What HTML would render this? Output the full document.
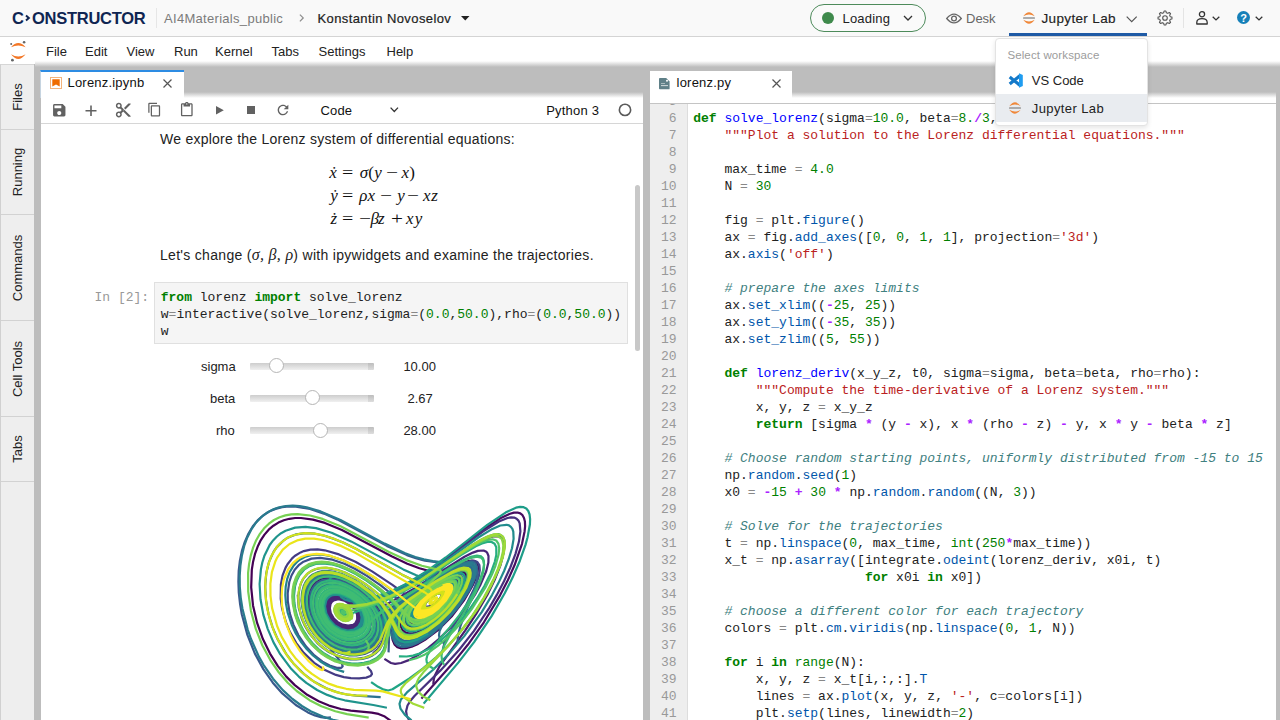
<!DOCTYPE html>
<html><head><meta charset="utf-8">
<style>
*{box-sizing:border-box}
html,body{margin:0;padding:0;width:1280px;height:720px;overflow:hidden;background:#bdbdbd;font-family:"Liberation Sans",sans-serif;color:#222}
.a{position:absolute}
svg{display:block;position:absolute;overflow:visible}
/* header */
#hdr{left:0;top:0;width:1280px;height:37px;background:#f9f9f9;border-bottom:1px solid #d4d4d4}
#logo{left:12px;top:8.5px;font-weight:bold;font-size:16.5px;color:#0f2552;letter-spacing:0px;white-space:nowrap;line-height:19px}
.ht{font-size:13px;white-space:nowrap;top:10.8px;line-height:16px}
.semi{-webkit-text-stroke:0.2px currentColor}
/* menu */
#menu{left:0;top:37px;width:1280px;height:27px;background:#fff}
#menushadow{left:35px;top:61px;width:1245px;height:5.5px;background:linear-gradient(#fff,#bdbdbd)}
.mi{font-size:13px;top:43.5px;color:#222;white-space:nowrap;line-height:16px}
/* sidebar */
#side{left:0;top:64px;width:34px;height:656px;background:#eeeeee;border-left:1px solid #d0d0d0;border-top:1px solid #d6d6d6}
.st{left:1px;width:33px;border-bottom:1px solid #d2d2d2}
.stx{position:absolute;left:50%;top:50%;transform:translate(-50%,-50%) rotate(-90deg);font-size:13px;color:#222;white-space:nowrap;line-height:16px}
/* panels */
.panel{background:#fff}
.toolshadow{background:linear-gradient(rgba(189,189,189,1),rgba(255,255,255,1))}
.tab{background:#fff}
.tt{font-size:13px;white-space:nowrap;letter-spacing:0.2px;line-height:16px;color:#111}
.mono{font-family:"Liberation Mono",monospace;font-size:13px}
.ln{height:17px;line-height:17px;white-space:pre}
b{font-weight:normal}
.k{color:#008000;font-weight:bold}
.d{color:#0000ff}
.s{color:#ba2121}
.n{color:#008000}
.c{color:#408080;font-style:italic}
.o{color:#aa22ff;font-weight:bold}
.e{color:#888}
.p{color:#0055aa}
.bi{color:#008000}
.gut{color:#999;text-align:right}
.md{font-size:14px;color:#222;white-space:nowrap;letter-spacing:0.25px;line-height:17px}
.eq{font-family:"Liberation Serif",serif;font-size:17.5px;white-space:nowrap;color:#111;line-height:20px}
.eqg{font-family:"Liberation Serif",serif;font-size:17px;line-height:30px;color:#111;white-space:nowrap}
.wl{font-size:13px;white-space:nowrap;color:#222;line-height:16px}
.track{height:7px;background:linear-gradient(90deg,rgba(0,0,0,0) 95%,rgba(0,0,0,.08) 95%),linear-gradient(#cdcdcd,#e2e2e2 60%,#f0f0f0);border-radius:1px}
.thumb{width:15px;height:15px;border-radius:50%;background:#fff;border:1px solid #b5b5b5}
/* dropdown */
#dd{left:995px;top:37.7px;width:152.5px;height:88.6px;background:#fff;border:1px solid #e3e3e3;border-radius:4px;box-shadow:0 2px 5px rgba(0,0,0,.10)}
</style></head>
<body>
<!-- ============ HEADER ============ -->
<div id="hdr" class="a"></div>
<div id="logo" class="a">C<span style="display:inline-block;width:8px"></span><span style="letter-spacing:-0.25px">ONSTRUCTOR</span></div>
<svg style="left:25px;top:15px" width="5" height="6"><path d="M1 0.6 L3.8 3 L1 5.4" fill="none" stroke="#0f2552" stroke-width="2"/></svg>
<div class="a" style="left:156px;top:8px;width:1px;height:20px;background:#e6e6e6"></div>
<div class="a ht" style="left:164px;color:#7b7b7b;letter-spacing:0.3px">AI4Materials_public</div>
<svg style="left:298.5px;top:14px" width="6" height="9"><path d="M0.9 0.6 L4.2 3.9 L0.9 7.4" fill="none" stroke="#8f8f8f" stroke-width="1.3"/></svg>
<div class="a ht semi" style="left:317.5px;color:#222;letter-spacing:0.4px">Konstantin Novoselov</div>
<svg style="left:461px;top:16px" width="9" height="5"><path d="M0 0 L8.5 0 L4.25 4.5Z" fill="#222"/></svg>

<!-- Loading pill -->
<div class="a" style="left:810px;top:4px;width:116px;height:28px;border:1px solid #4d8b5b;border-radius:14px;background:#fafafa"></div>
<div class="a" style="left:822px;top:12px;width:12px;height:12px;border-radius:50%;background:#3f8a4c"></div>
<div class="a ht" style="left:842.5px;color:#222;letter-spacing:0.2px">Loading</div>
<svg style="left:903px;top:15px" width="10" height="6"><path d="M1 1 L5 5 L9 1" fill="none" stroke="#333" stroke-width="1.3"/></svg>

<!-- Desk -->
<svg style="left:946px;top:12.5px" width="16" height="11"><path d="M0.7 5.5 Q8 -3.3 15.3 5.5 Q8 14.3 0.7 5.5Z" fill="none" stroke="#666" stroke-width="1.3"/><circle cx="8" cy="5.5" r="2.4" fill="none" stroke="#666" stroke-width="1.3"/></svg>
<div class="a ht" style="left:966px;color:#666">Desk</div>

<!-- Jupyter Lab -->
<svg style="left:1022px;top:11px" width="14" height="14"><path d="M1.3 5.2 Q7 -2.6 12.7 5.2 Q7 1.6 1.3 5.2Z" fill="#f0883a"/><path d="M1.3 8.8 Q7 16.6 12.7 8.8 Q7 12.4 1.3 8.8Z" fill="#f0883a"/><rect x="1" y="6.1" width="12" height="1.8" rx="0.4" fill="#9a9a9a" opacity="0.8"/></svg>
<div class="a ht semi" style="left:1041.5px;color:#222;letter-spacing:0.35px;font-size:13.5px;top:10.8px;-webkit-text-stroke:0.15px #222">Jupyter Lab</div>
<svg style="left:1125.5px;top:15.5px" width="12" height="7"><path d="M0.7 0.7 L5.7 5.7 L10.7 0.7" fill="none" stroke="#555" stroke-width="1.2"/></svg>
<div class="a" style="left:1009px;top:33px;width:138px;height:3px;background:#1f5ba6"></div>

<!-- gear / user / help -->
<svg style="left:1157px;top:10px" width="16" height="16"><path d="M13.23 6.66 L14.94 7.07 L14.94 8.93 L13.23 9.34 L12.65 10.75 L13.56 12.25 L12.25 13.56 L10.75 12.65 L9.34 13.23 L8.93 14.94 L7.07 14.94 L6.66 13.23 L5.25 12.65 L3.75 13.56 L2.44 12.25 L3.35 10.75 L2.77 9.34 L1.06 8.93 L1.06 7.07 L2.77 6.66 L3.35 5.25 L2.44 3.75 L3.75 2.44 L5.25 3.35 L6.66 2.77 L7.07 1.06 L8.93 1.06 L9.34 2.77 L10.75 3.35 L12.25 2.44 L13.56 3.75 L12.65 5.25Z" fill="none" stroke="#555" stroke-width="1.1" stroke-linejoin="round"/><circle cx="8" cy="8" r="2.3" fill="none" stroke="#555" stroke-width="1.1"/></svg>
<div class="a" style="left:1183px;top:8px;width:1px;height:20px;background:#e4e4e4"></div>
<svg style="left:1196px;top:10.5px" width="13" height="14"><circle cx="6" cy="3.3" r="2.6" fill="none" stroke="#333" stroke-width="1.3"/><path d="M0.8 13 L0.8 11.5 Q0.8 7.6 6 7.6 Q11.2 7.6 11.2 11.5 L11.2 13Z" fill="none" stroke="#333" stroke-width="1.3" stroke-linejoin="round"/></svg>
<svg style="left:1212px;top:15.5px" width="9" height="5"><path d="M0.7 0.7 L4 3.9 L7.3 0.7" fill="none" stroke="#333" stroke-width="1.3"/></svg>
<div class="a" style="left:1237px;top:11px;width:13.2px;height:13.2px;border-radius:50%;background:#1680b9"></div>
<div class="a" style="left:1237px;top:11.5px;width:13.2px;text-align:center;font-size:11px;font-weight:bold;color:#fff;line-height:13px">?</div>
<svg style="left:1254.5px;top:15.5px" width="9" height="5"><path d="M0.7 0.7 L4 3.9 L7.3 0.7" fill="none" stroke="#333" stroke-width="1.3"/></svg>

<!-- ============ MENU ============ -->
<div id="menu" class="a"></div>
<div id="menushadow" class="a"></div>
<svg style="left:10px;top:41px" width="17" height="21"><path d="M1 6.2 Q8.3 -2.2 15.6 6.2 Q8.3 3 1 6.2Z" fill="#f37726"/><path d="M1 13.3 Q8.3 22.7 15.6 13.3 Q8.3 17.9 1 13.3Z" fill="#f37726"/><circle cx="1.2" cy="2.9" r="1" fill="#666"/><circle cx="14.1" cy="1.3" r="1.3" fill="#666"/><circle cx="2.4" cy="19.2" r="1.4" fill="#666"/></svg>
<div class="a mi" style="left:46px">File</div>
<div class="a mi" style="left:85px">Edit</div>
<div class="a mi" style="left:126.5px">View</div>
<div class="a mi" style="left:174px">Run</div>
<div class="a mi" style="left:215px">Kernel</div>
<div class="a mi" style="left:271.5px">Tabs</div>
<div class="a mi" style="left:318.5px">Settings</div>
<div class="a mi" style="left:386.5px">Help</div>

<!-- ============ SIDEBAR ============ -->
<div id="side" class="a"></div>
<div class="a st" style="top:64px;height:66px"><span class="stx">Files</span></div>
<div class="a st" style="top:130px;height:85px"><span class="stx">Running</span></div>
<div class="a st" style="top:215px;height:106px"><span class="stx">Commands</span></div>
<div class="a st" style="top:321px;height:96px"><span class="stx">Cell Tools</span></div>
<div class="a st" style="top:417px;height:65px"><span class="stx">Tabs</span></div>

<!-- ============ NOTEBOOK PANEL ============ -->
<div class="a panel" style="left:41px;top:97px;width:602px;height:623px"></div>
<div class="a toolshadow" style="left:41px;top:92px;width:602px;height:6px"></div>
<div class="a tab" style="left:40px;top:70px;width:143.5px;height:28px;border-top:2px solid #2d8ce3;border-left:1px solid #c6d4e0"></div>
<svg style="left:50px;top:77px" width="12" height="12"><rect x="0.5" y="0.5" width="11" height="11" fill="#fff" stroke="#f3b47c" stroke-width="1"/><path d="M2.3 2.3 H9.7 V9.6 L6 7.6 L2.3 9.6Z" fill="#ef6c00"/></svg>
<div class="a tt" style="left:67.5px;top:75px">Lorenz.ipynb</div>
<svg style="left:162.5px;top:78.5px" width="9" height="9"><path d="M0.5 0.5 L8.5 8.5 M8.5 0.5 L0.5 8.5" stroke="#555" stroke-width="1.2"/></svg>

<!-- toolbar icons -->
<svg style="left:50.7px;top:101.8px" width="16.5" height="16.5" viewBox="0 0 24 24"><path fill="#616161" d="M17 3H5c-1.11 0-2 .9-2 2v14c0 1.1.89 2 2 2h14c1.1 0 2-.9 2-2V7l-4-4zm-5 16c-1.66 0-3-1.34-3-3s1.34-3 3-3 3 1.34 3 3-1.34 3-3 3zm3-10H5V5h10v4z"/></svg>
<svg style="left:85px;top:104.5px" width="12" height="12"><path d="M6 0.5 V11 M0.5 5.8 H11.5" stroke="#616161" stroke-width="1.6"/></svg>
<svg style="left:114.8px;top:102.3px" width="16.5" height="15.5" viewBox="1 1 22 21"><path fill="#616161" d="M9.64 7.64c.23-.5.36-1.050.36-1.64 0-2.21-1.79-4-4-4S2 3.79 2 6s1.79 4 4 4c.59 0 1.14-.13 1.64-.36L10 12l-2.36 2.360C7.14 14.13 6.59 14 6 14c-2.21 0-4 1.79-4 4s1.79 4 4 4 4-1.79 4-4c0-.59-.13-1.14-.36-1.64L12 14l7 7h3v-1L9.64 7.64zM6 8c-1.1 0-2-.89-2-2s.9-2 2-2 2 .89 2 2-.9 2-2 2zm0 12c-1.1 0-2-.89-2-2s.9-2 2-2 2 .89 2 2-.9 2-2 2zm6-7.5c-.28 0-.5-.22-.5-.5s.22-.5.5-.5.5.22.5.5-.22.5-.5.5zM19 3l-6 6 2 2 7-7V3z"/></svg>
<svg style="left:147.1px;top:102.4px" width="15" height="15" viewBox="0 0 24 24"><path fill="#616161" d="M16 1H4c-1.1 0-2 .9-2 2v14h2V3h12V1zm3 4H8c-1.1 0-2 .9-2 2v14c0 1.1.9 2 2 2h11c1.1 0 2-.9 2-2V7c0-1.1-.9-2-2-2zm0 16H8V7h11v14z"/></svg>
<svg style="left:178.9px;top:102.4px" width="15.6" height="15.6" viewBox="0 0 24 24"><path fill="#616161" d="M19 2h-4.18C14.4.84 13.3 0 12 0c-1.3 0-2.4.84-2.82 2H5c-1.1 0-2 .9-2 2v16c0 1.1.9 2 2 2h14c1.1 0 2-.9 2-2V4c0-1.1-.9-2-2-2zm-7 0c.55 0 1 .45 1 1s-.45 1-1 1-1-.45-1-1 .45-1 1-1zm7 18H5V4h2v3h10V4h2v16z"/></svg>
<svg style="left:215.7px;top:105.8px" width="8" height="9"><path d="M0 0 V8.6 L7.8 4.3Z" fill="#616161"/></svg>
<div class="a" style="left:247px;top:106px;width:8px;height:8px;background:#616161"></div>
<svg style="left:274.8px;top:101.8px" width="16" height="16" viewBox="0 0 24 24"><path fill="#616161" d="M17.65 6.35C16.2 4.9 14.21 4 12 4c-4.42 0-7.99 3.58-7.990 8s3.570 8 7.990 8c3.73 0 6.84-2.55 7.73-6h-2.08c-.82 2.33-3.04 4-5.650 4-3.31 0-6-2.69-6-6s2.69-6 6-6c1.66 0 3.14.69 4.22 1.78L13 11h7V4l-2.35 2.35z"/></svg>
<div class="a tt" style="left:320.4px;top:102.5px">Code</div>
<svg style="left:389.5px;top:107.2px" width="9" height="6"><path d="M0.6 0.6 L4.3 4.5 L8 0.6" fill="none" stroke="#333" stroke-width="1.3"/></svg>
<div class="a tt" style="left:546.2px;top:103px">Python 3</div>
<svg style="left:617px;top:102px" width="16" height="16"><circle cx="8" cy="7.9" r="5.65" fill="none" stroke="#5a5a5a" stroke-width="1.6"/></svg>
<div class="a" style="left:41px;top:123px;width:602px;height:1px;background:#d6d6d6"></div>

<!-- notebook content -->
<div class="a md" style="left:160px;top:131px">We explore the Lorenz system of differential equations:</div>
<span class="a eqg" style="left:329.30px;top:158.06px;font-style:italic">ẋ</span>
<span class="a eqg" style="left:342.22px;top:158.06px;transform:scaleX(1.175);transform-origin:0 0">=</span>
<span class="a eqg" style="left:359.80px;top:158.06px;font-style:italic">σ</span>
<span class="a eqg" style="left:368.20px;top:158.06px">(</span>
<span class="a eqg" style="left:374.30px;top:158.06px;font-style:italic">y</span>
<span class="a eqg" style="left:385.55px;top:158.06px;transform:scaleX(1.250);transform-origin:0 0">−</span>
<span class="a eqg" style="left:401.40px;top:158.06px;font-style:italic">x</span>
<span class="a eqg" style="left:409.20px;top:158.06px">)</span>
<span class="a eqg" style="left:330.30px;top:181.36px;font-style:italic">ẏ</span>
<span class="a eqg" style="left:342.22px;top:181.36px;transform:scaleX(1.175);transform-origin:0 0">=</span>
<span class="a eqg" style="left:359.20px;top:181.36px;font-style:italic">ρ</span>
<span class="a eqg" style="left:367.40px;top:181.36px;font-style:italic">x</span>
<span class="a eqg" style="left:379.65px;top:181.36px;transform:scaleX(1.250);transform-origin:0 0">−</span>
<span class="a eqg" style="left:397.20px;top:181.36px;font-style:italic">y</span>
<span class="a eqg" style="left:407.26px;top:181.36px;transform:scaleX(1.237);transform-origin:0 0">−</span>
<span class="a eqg" style="left:423.10px;top:181.36px;font-style:italic">x</span>
<span class="a eqg" style="left:431.30px;top:181.36px;font-style:italic">z</span>
<span class="a eqg" style="left:330.50px;top:204.26px;font-style:italic">ż</span>
<span class="a eqg" style="left:342.22px;top:204.26px;transform:scaleX(1.175);transform-origin:0 0">=</span>
<span class="a eqg" style="left:358.55px;top:204.26px;transform:scaleX(1.250);transform-origin:0 0">−</span>
<span class="a eqg" style="left:370.40px;top:204.26px;font-style:italic">β</span>
<span class="a eqg" style="left:378.00px;top:204.26px;font-style:italic">z</span>
<span class="a eqg" style="left:390.75px;top:204.26px;transform:scaleX(1.250);transform-origin:0 0">+</span>
<span class="a eqg" style="left:406.10px;top:204.26px;font-style:italic">x</span>
<span class="a eqg" style="left:414.75px;top:204.26px;font-style:italic">y</span>
<div class="a md" style="left:160px;top:246px;letter-spacing:0.3px">Let's change (<span style="font-family:'Liberation Serif',serif;font-style:italic;font-size:16px">σ, β, ρ</span>) with ipywidgets and examine the trajectories.</div>
<div class="a mono" style="left:94.5px;top:288.5px;color:#999"><div class="ln">In [2]:</div></div>
<div class="a" style="left:154px;top:282px;width:474px;height:62px;background:#f5f5f5;border:1px solid #e0e0e0"></div>
<div class="a mono" style="left:160.75px;top:288.5px">
<div class="ln"><b class="k">from</b> lorenz <b class="k">import</b> solve_lorenz</div>
<div class="ln">w<b class="e">=</b>interactive(solve_lorenz,sigma<b class="e">=</b>(<b class="n">0.0</b>,<b class="n">50.0</b>),rho<b class="e">=</b>(<b class="n">0.0</b>,<b class="n">50.0</b>))</div>
<div class="ln">w</div>
</div>
<div class="a" style="left:635px;top:185px;width:5.4px;height:166px;background:#c8c8c8;border-radius:3px"></div>

<!-- widgets -->
<div class="a wl" style="left:201px;top:359px">sigma</div>
<div class="a wl" style="left:210px;top:391px">beta</div>
<div class="a wl" style="left:216px;top:423px">rho</div>
<div class="a track" style="left:250px;top:362.5px;width:124px"></div>
<div class="a track" style="left:250px;top:394.5px;width:124px"></div>
<div class="a track" style="left:250px;top:426.5px;width:124px"></div>
<div class="a thumb" style="left:268.75px;top:358.4px"></div>
<div class="a thumb" style="left:305.25px;top:390.25px"></div>
<div class="a thumb" style="left:312.5px;top:422.5px"></div>
<div class="a wl" style="left:403.4px;top:359px">10.00</div>
<div class="a wl" style="left:407.5px;top:391px">2.67</div>
<div class="a wl" style="left:403.4px;top:423px">28.00</div>

<svg id="plot" width="1280" height="720" viewBox="0 0 1280 720" style="position:absolute;left:0;top:0" fill="none" stroke-width="2.2" stroke-linejoin="round" stroke-linecap="square"><path stroke="#440154" d="M394.3 723.3 384.8 716.6 378.5 713.9 371.7 712.7 350.7 710.7 340.9 709.0 329.0 705.6 318.7 701.3 307.2 694.8 294.8 685.1 286.3 676.6 277.9 666.1 270.0 653.6 262.9 639.1 257.1 622.9 253.0 605.4 251.2 587.4 251.8 569.9 253.1 561.7 255.0 553.9 257.6 546.8 260.7 540.3 264.5 534.6 268.7 529.7 273.4 525.7 278.4 522.6 283.8 520.3 289.4 518.8 295.1 518.0 301.0 518.0 313.0 519.6 324.9 522.9 341.9 530.0 391.6 556.3 407.3 563.7 419.4 568.3 437.6 573.4 438.9 575.1 437.7 577.5 417.7 597.8 413.0 603.7 409.9 609.0 408.3 614.0 408.4 618.6 410.5 621.8 413.9 623.5 420.2 623.2 427.3 620.3 435.1 615.3 443.5 607.7 450.6 599.2 455.8 590.4 457.3 586.4 457.7 583.1 457.1 580.8 455.9 579.7 453.5 579.2 449.2 580.0 438.1 585.3 423.6 595.0 412.4 604.9 407.2 612.1 405.7 615.7 405.1 618.9 405.4 621.7 406.7 624.4 408.9 626.3 411.7 627.3 414.7 627.4 418.4 626.9 427.0 623.4 435.7 617.5 444.2 609.7 452.4 599.9 458.7 589.4 461.1 581.6 460.8 578.5 459.6 577.0 457.0 576.2 452.2 576.9 446.1 579.4 439.4 583.0 421.4 595.0 414.3 600.7 408.3 606.5 404.6 611.1 402.2 615.2 400.7 619.5 400.3 623.3 400.9 627.0 402.6 630.0 405.2 632.2 408.6 633.3 412.5 633.3 416.6 632.5 426.2 628.2 437.5 620.2 447.6 610.3 457.3 597.9 463.7 586.5 465.7 580.7 466.3 577.1 465.8 574.3 464.4 572.4 461.1 571.5 456.4 572.4 449.0 575.4 440.8 579.9 427.7 588.3 415.1 597.2 406.7 604.1 400.1 610.7 396.3 615.9 393.6 621.8 392.1 627.6 391.8 634.0 392.6 639.9 394.5 644.4 397.4 647.2 401.3 648.4 406.0 648.2 411.6 646.7 418.1 643.9 425.0 639.9 437.9 630.1 451.6 616.5 463.8 600.7 472.5 585.7 475.7 578.5 477.6 572.0 478.1 566.7 477.0 562.9 474.4 560.9 471.7 560.6 468.5 561.0 460.6 563.9 448.9 570.2 410.9 594.6 391.6 608.0 382.4 616.3 370.8 630.8 365.0 636.1 361.0 638.2 356.2 639.7 351.4 640.2 346.9 639.9"/><path stroke="#470d60" d="M422.2 697.8 453.4 662.6 467.8 644.8 483.9 622.3 500.2 595.1 507.8 580.3 514.5 565.3 522.0 543.8 524.6 531.4 525.1 526.2 524.9 521.6 524.0 518.0 522.5 515.2 520.3 513.4 517.5 512.5 514.0 512.6 510.0 513.7 500.3 518.3 482.9 530.0 444.2 559.5 425.9 572.5 403.9 585.6 385.4 593.9 377.4 596.4 366.8 598.6 357.9 599.1 348.4 598.0 341.3 595.6 335.7 591.5 333.8 588.9 333.0 586.5 333.2 584.5 334.2 582.9 337.4 581.5 342.8 581.9 349.0 584.3 355.3 588.0 361.0 592.5 366.6 598.2 371.4 604.7 374.7 610.9 376.7 616.7 377.6 622.6 377.5 628.0 376.3 633.4 374.1 637.8 371.0 641.6 367.1 644.6 362.0 646.9 356.3 648.1 350.4 648.3 344.7 647.4 338.5 645.5 333.1 642.9 327.7 639.2 322.3 634.4 318.4 629.9 314.0 622.9 311.3 617.0 309.3 610.8 308.3 604.5 308.2 598.3 309.2 592.6 311.3 587.6 314.3 583.5 319.5 579.7 325.8 577.9 334.4 578.2 343.1 580.5 352.8 585.1 362.5 591.6 371.0 599.1 378.2 608.0 382.8 616.4 385.5 625.0 386.6 635.1 385.9 644.8 384.0 651.4 380.7 656.3 375.5 660.3 368.8 663.1 361.9 664.6 355.1 664.9 348.2 664.3 340.2 662.5 333.0 659.8 325.2 655.5 319.2 651.1 313.1 645.4 307.3 638.4 302.0 630.1 297.6 620.6 295.4 613.9 293.3 603.3 292.9 596.4 293.3 589.6 294.5 583.3 296.6 577.7 299.5 572.8 303.1 568.8 309.6 564.6 314.4 563.0 322.3 562.2 327.7 562.6 335.8 564.4 343.8 567.2 351.3 570.6 360.5 575.7 370.4 582.1 380.1 589.3 388.6 596.7 408.3 617.6 412.7 620.2 417.3 621.0 423.6 619.9 430.4 616.7 437.1 611.9 444.1 605.3 450.3 597.5 454.5 589.7 455.5 586.4 455.6 583.8 454.7 581.9 453.4 581.2 450.9 581.0 446.8 582.0 435.6 587.7 422.8 596.7 413.7 605.2 409.0 612.3 408.0 615.6 407.9 618.5 408.8 621.2 410.4 623.0 412.8 624.1 416.0 624.5 422.8 623.0 430.0 619.4 438.3 613.2 446.0 605.6 452.9 596.5 457.1 588.6 458.4 582.3 457.7 580.0 456.4 579.0 453.7 578.6 449.1 579.6 437.6 585.3 421.7 596.1 410.9 606.0 405.7 613.7 404.5 617.2 404.2 620.4 404.8 623.5 406.3 626.0 408.8 627.7 411.9 628.5 415.7 628.4 420.6 627.2 425.5 625.0 431.2 621.6 437.4 616.8 443.0 611.8 452.7 600.5"/><path stroke="#481a6c" d="M433.4 683.2 433.8 679.3 435.0 675.3 439.4 666.6 465.1 630.6 476.2 613.9 487.3 594.9 494.6 580.0 500.4 565.4 503.6 552.6 504.1 545.7 503.8 542.9 502.0 538.6 500.5 537.3 498.6 536.4 493.7 536.3 487.5 538.2 480.3 541.7 467.9 549.2 420.5 580.9 406.0 589.4 393.5 595.7 380.8 600.9 367.6 605.0 356.6 607.0 345.7 607.5 348.0 613.2 347.6 615.4 346.2 616.7 342.7 616.6 339.5 614.1 338.4 610.6 338.9 609.2 339.9 608.2 341.5 607.8 343.5 608.2 346.8 610.9 347.9 614.4 347.4 616.0 346.2 617.0 344.5 617.3 342.6 616.8 339.4 614.3 338.1 610.6 338.6 609.0 339.7 607.9 341.3 607.6 343.4 608.0 347.0 610.8 348.0 612.7 348.2 614.7 347.6 616.3 346.3 617.3 344.5 617.6 342.4 617.1 339.1 614.3 338.1 612.4 337.8 610.4 338.3 608.7 339.4 607.7 341.1 607.3 343.4 607.7 347.2 610.6 348.3 612.6 348.6 614.7 347.9 616.5 346.6 617.5 344.7 617.9 342.5 617.4 338.9 614.6 337.8 612.5 337.5 610.4 338.0 608.6 339.3 607.4 341.2 606.9 343.5 607.4 345.8 608.7 347.5 610.6 348.6 612.7 348.9 615.0 348.2 616.8 346.7 617.9 344.7 618.2 342.4 617.7 338.6 614.6 337.5 612.4 337.1 610.2 337.7 608.2 339.1 607.0 342.1 606.7 345.6 608.3 348.3 611.3 349.3 614.6 348.3 617.3 345.7 618.6 342.3 618.0 339.2 615.9"/><path stroke="#482576" d="M385.3 659.5 391.0 663.0 395.1 663.9 401.1 663.0 408.8 660.1 418.1 655.0 428.0 648.2 438.5 639.4 448.7 629.5 457.5 619.5 466.4 607.8 475.0 594.6 480.6 584.4 486.2 571.2 488.4 562.6 488.5 556.0 487.3 552.9 486.3 551.8 483.6 550.5 477.8 550.9 472.9 552.6 464.5 556.7 412.7 589.4 375.8 610.5 358.6 622.1 353.1 624.8 348.1 625.6 342.7 624.7 337.8 622.1 333.9 618.5 330.8 613.3 329.8 608.2 330.6 603.8 331.8 602.0 333.7 600.4 338.4 599.3 344.3 600.6 350.2 604.2 354.5 609.0 357.1 614.4 357.2 619.5 355.2 623.5 351.2 626.1 346.6 626.7 341.1 625.3 336.1 622.2 332.3 618.0 329.6 612.8 328.7 607.3 329.9 602.6 333.0 599.4 338.1 598.3 344.5 599.7 350.9 603.7 355.5 608.8 358.2 614.6 358.4 619.9 357.5 622.6 356.1 624.6 351.8 627.3 346.8 627.8 341.0 626.4 335.6 623.0 331.4 618.4 328.5 612.8 327.6 606.8 328.7 602.2 330.0 600.1 331.9 598.6 334.2 597.6 337.4 597.1 344.3 598.6 351.2 602.8 356.7 608.8 359.5 614.9 359.9 617.8 359.6 621.0 358.5 623.7 357.0 625.8 352.3 628.6 347.0 629.1 340.7 627.6 334.9 623.9 330.3 618.9 327.2 612.6 326.3 606.1 327.6 601.1 329.2 598.9 331.3 597.2 333.8 596.2 337.4 595.9 341.2 596.4 344.9 597.7 352.4 602.4 358.1 608.8 359.9 612.1 361.1 615.8 361.4 618.9 361.0 622.1 359.7 625.0 358.1 627.1 355.4 629.1 352.5 630.2 346.0 630.5 339.8 628.6 334.2 625.0 329.2 619.5 325.8 612.6 324.8 606.2 326.0 600.6 327.6 598.0 329.9 596.1 332.6 594.9 336.5 594.4 344.0 596.0 348.0 597.8 352.3 600.7 358.8 607.6 361.0 611.1 362.5 615.1 363.1 618.4 362.9 621.9 361.9 625.1 360.1 627.9 357.5 630.1 354.7 631.5"/><path stroke="#46307e" d="M414.5 726.4 410.1 721.8 406.9 716.2 406.1 711.3 407.5 705.5 410.4 700.8 414.7 695.7 440.5 670.4 459.2 649.8 473.8 631.1 489.3 607.9 496.8 594.9 504.0 581.3 510.3 567.5 515.4 554.1 518.9 541.8 520.4 531.3 519.7 523.4 518.5 520.6 516.6 518.7 514.2 517.6 511.1 517.4 507.5 518.0 498.9 521.5 483.2 531.4 441.5 562.4 424.5 574.1 404.2 586.1 387.0 593.9 379.6 596.4 369.8 598.8 361.4 599.8 352.4 599.5 345.6 598.0 339.9 595.1 336.6 591.4 336.2 589.3 337.1 587.7 339.5 586.9 343.8 587.4 348.7 589.4 353.7 592.5 358.3 596.3 362.9 601.3 366.4 606.3 368.9 611.2 370.3 616.0 371.0 620.4 370.8 624.5 369.9 628.2 367.9 632.1 365.4 635.0 362.1 637.5 358.6 639.1 354.3 640.1 349.4 640.3 344.7 639.6 339.7 638.1 331.1 633.2 327.0 629.5 323.1 624.9 319.8 619.7 317.9 615.3 316.1 609.2 315.6 604.6 316.0 598.8 317.2 594.9 319.0 591.6 321.5 588.9 325.6 586.5 330.4 585.3 336.9 585.6 343.5 587.4 350.9 590.9 357.4 595.3 363.6 600.8 368.3 606.4 371.8 612.4 373.9 618.0 374.8 623.8 374.3 629.0 372.5 634.2 369.6 638.2 365.5 641.6 360.5 643.9 355.9 645.0 350.4 645.2 345.1 644.5 339.4 642.8 333.2 639.8 328.2 636.2 323.3 631.7 319.9 627.5 316.0 621.1 313.6 615.9 312.0 610.3 311.1 604.6 311.3 597.4 312.6 592.5 314.7 588.3 317.7 585.0 322.6 582.0 328.4 580.7 336.2 581.2 344.1 583.5 352.8 587.8 361.5 593.8 369.1 600.9 374.5 607.7 378.4 614.7 380.8 622.3 381.4 629.5 380.5 636.3 378.3 641.8 374.5 646.7 369.2 650.6 363.0 653.0 356.7 654.1 350.1 654.0 343.6 652.9 336.4 650.5 330.2 647.3 323.9 642.7 317.6 636.7 313.2 631.1 309.3 624.6 306.1 617.5 303.9 609.9 302.8 602.2 303.0 594.7 304.5 587.9 307.2 582.0 311.2 577.5 314.4 575.3 319.7 573.1 323.6 572.4 329.8 572.4 336.0 573.5 342.2 575.3 350.0 578.7 357.2 582.7 370.5 592.3 377.0 598.4 382.1 604.0 388.3 612.9 396.3 629.0 399.6 633.8 403.8 636.6 409.4 637.3 413.4 636.7 418.2 635.2 428.3 629.8 439.7 621.0 449.5 611.1 459.0 598.9 466.4 585.8 468.4 580.7 469.4 576.2 469.4 572.6 468.3 570.1 466.0 568.7 461.4 568.8 455.4 570.8 448.4 574.2 437.1 580.8 422.9 590.1 411.1 598.5 402.4 605.5 396.3 611.5 391.3 618.0 387.9 625.0 381.5 643.6 378.1 648.7 373.8 652.5"/><path stroke="#443b84" d="M368.0 667.6 371.1 671.3 372.0 674.1 370.5 676.0 366.2 677.6 359.2 678.4 350.9 678.2 343.9 677.1 335.9 674.9 324.4 669.7 314.2 662.8 303.8 652.9 296.3 643.1 289.6 631.3 286.0 622.5 282.0 608.2 280.7 598.5 280.9 584.2 282.6 575.4 285.6 567.6 287.5 564.2 292.1 558.4 294.7 556.0 300.6 552.4 303.8 551.1 310.5 549.6 317.6 549.4 324.7 550.3 339.0 554.4 355.4 561.8 372.1 571.4 392.4 584.9 416.8 602.7 422.2 605.8 425.0 606.5 428.0 606.6 431.1 605.7 434.4 603.9 437.9 601.1 440.5 597.9 441.7 594.9 441.1 593.3 438.9 593.2 435.6 594.5 428.4 599.9 426.0 602.7 424.6 605.4 424.6 607.4 426.0 608.4 428.3 608.2 431.4 607.0 437.6 602.2 442.0 596.1 442.4 593.8 441.4 592.8 439.2 592.8 435.6 594.3 427.9 600.1 425.4 603.0 424.0 605.8 424.0 607.9 425.5 608.9 428.0 608.8 431.3 607.5 437.9 602.4 440.8 599.0 442.6 595.8 442.9 593.4 441.9 592.2 439.5 592.3 435.6 594.0 431.4 596.7 427.4 600.2 424.7 603.3 423.3 606.2 423.4 608.4 425.0 609.5 427.6 609.4 431.0 608.0 438.1 602.6 441.2 599.0 443.2 595.6 443.6 592.9 442.5 591.7 439.9 591.8 435.7 593.6 431.2 596.4 426.9 600.2 424.1 603.5 422.6 606.6 422.7 608.9 424.3 610.1 427.0 610.1 430.6 608.7 434.4 606.3 438.2 603.0 441.5 599.2 443.8 595.4 444.3 592.5 443.2 591.1 440.4 591.2 436.0 593.0 430.7 596.5 426.2 600.4 423.3 603.9 421.7 607.2 421.9 609.6 423.7 610.9 426.3 610.8 429.2 609.9 436.3 605.3 442.5 598.6 444.5 595.0 445.1 592.4"/><path stroke="#404588" d="M443.2 647.9 444.6 642.7 448.1 635.3 466.1 605.1 475.4 586.3 478.8 576.4 479.8 570.1 479.4 565.2 477.4 562.1 475.1 561.1 472.2 560.9 464.8 562.8 453.3 568.4 435.8 578.9 404.8 598.9 391.9 608.0 381.7 616.9 371.3 629.8 367.4 633.7 361.7 637.5 355.6 639.4 350.8 639.8 346.3 639.4 341.4 638.2 337.2 636.4 328.9 630.6 322.3 622.9 319.3 617.5 317.6 613.1 316.3 607.1 316.1 602.7 316.6 598.5 317.8 594.8 319.7 591.6 323.1 588.4 327.4 586.4 333.5 585.7 340.0 586.7 346.3 589.0 353.3 592.9 360.2 598.1 365.6 603.6 369.9 609.8 372.6 615.5 374.0 621.5 373.9 626.9 372.5 632.3 370.0 636.5 366.3 640.1 361.7 642.6 355.8 644.2 350.4 644.4 345.3 643.8 339.6 642.1 334.9 639.9 326.3 633.7 321.7 628.8 318.6 624.4 315.1 617.9 313.2 612.5 312.1 607.1 311.7 601.7 312.3 596.6 313.7 592.0 316.0 588.1 319.0 585.0 324.0 582.4 331.2 581.4 338.9 582.5 346.4 585.1 354.7 589.6 362.7 595.6 369.8 602.6 375.1 610.0 378.5 617.4 380.1 624.7 380.1 631.6 378.4 638.1 375.2 643.4 370.6 647.6 364.4 650.7 357.8 652.2 351.6 652.4 345.6 651.7 338.9 649.8 333.0 647.1 326.9 643.2 322.3 639.4 317.9 634.8 313.8 629.3 310.1 623.1 307.2 616.3 305.2 609.1 304.5 604.2 304.4 597.0 305.5 590.4 306.9 586.4 310.0 581.4 312.7 578.7 317.4 575.8 322.7 574.2 328.5 573.9 334.4 574.6 340.3 576.1 347.9 579.1 355.0 582.8 362.8 587.9 369.4 593.1 375.7 599.0 381.2 605.4 387.3 614.9 394.7 633.1 398.0 638.2 400.8 640.2 404.1 641.3 407.9 641.4 412.7 640.5 422.7 636.2 433.7 628.8 443.8 619.9 454.6 608.0 463.2 595.8 469.8 583.3 471.8 577.7 472.7 572.8 472.4 569.0 471.5 567.3 469.0 565.8 465.3 565.7 460.7 566.9 453.3 570.2 434.6 581.1 407.1 599.8 396.3 608.4 389.5 615.4 384.9 622.2 377.7 635.9 373.7 641.2 368.0 645.8 360.5 648.7 351.1 649.6 345.4 648.8 340.3 647.4 330.7 642.8 322.2 635.9 315.7 627.9 310.5 618.2 307.5 607.3 306.9 600.7 307.2 596.5 309.2 588.8 313.0 582.8 318.4 578.7 321.5 577.5 326.6 576.6 335.7 577.3 344.6 580.1 354.6 585.0 365.5 592.7"/><path stroke="#3c4f8a" d="M331.5 650.4 341.6 662.9 342.7 666.3 341.3 667.9 336.8 667.9 329.6 665.5 322.5 661.6 314.4 655.4 306.1 646.6 298.3 635.0 293.4 624.6 289.7 613.1 287.8 601.1 287.7 593.2 289.3 582.0 291.5 575.5 294.7 569.8 298.7 565.2 303.5 561.7 311.5 558.6 320.3 557.9 332.5 559.7 344.3 563.8 355.2 569.0 367.2 576.1 380.7 585.3 394.0 596.0 410.8 611.6 414.5 614.0 418.3 615.3 423.0 615.3 428.4 613.7 434.4 610.2 439.9 605.6 445.5 599.3 449.1 593.6 450.6 588.7 450.4 587.0 449.5 585.9 447.9 585.4 445.2 585.7 438.0 588.7 428.6 594.8 421.0 601.4 416.5 606.9 414.3 611.9 414.3 613.9 415.0 615.8 416.4 617.2 418.3 617.9 423.2 617.5 429.1 615.1 435.4 611.0 441.3 605.7 447.2 598.6 451.0 592.2 452.3 587.1 451.8 585.3 450.9 584.5 449.2 584.0 446.1 584.4 438.0 587.9 427.7 594.7 418.9 602.3 414.1 608.6 412.3 613.7 412.4 615.8 413.3 617.8 415.0 619.2 417.1 619.8 422.3 619.4 428.8 616.7 435.6 612.2 442.8 605.6 448.6 598.5 452.8 591.3 454.1 585.6 453.5 583.7 452.5 582.8 450.5 582.4 446.9 583.0 437.8 587.1 426.4 594.7 417.0 602.9 411.9 609.5 409.9 615.4 410.2 618.0 411.2 620.0 413.1 621.5 415.3 622.2 421.5 621.6 428.5 618.6 436.0 613.5 443.2 607.0 449.8 599.0 454.7 590.8 456.0 587.1 456.4 584.1 455.8 581.9 454.7 580.8 452.5 580.3 448.5 581.1 438.1 585.9 424.4 595.0 413.8 604.6 408.8 611.5 407.4 615.0 406.9 618.0 407.3 620.7 408.7 623.1 410.8 624.6 413.6 625.4 420.5 624.6 428.2 621.2 436.6 615.4 444.6 607.8 452.1 598.6 457.6 589.0 459.4 582.2 458.8 579.5 457.6 578.3 454.1 577.8 449.3 579.0 443.4 581.6 435.9 585.9 426.1 592.4 417.9 598.7 411.6 604.5 407.2 609.7 404.2 614.8 403.0 619.3 403.2 623.6 404.8 627.0 407.9 629.3 412.0 630.1 416.9 629.6 422.2 627.7"/><path stroke="#38598c" d="M329.8 717.4 325.9 717.8 320.9 717.1 314.9 715.4 307.9 712.4 295.8 705.0 282.3 693.4 272.8 682.7 263.5 669.4 254.8 653.4 247.4 634.9 241.8 614.3 240.0 603.5 238.8 592.6 238.4 581.7 238.7 571.0 239.9 560.7 241.9 550.9 244.8 541.9 248.4 533.7 252.7 526.5 257.6 520.4 263.1 515.5 269.1 511.6 275.5 508.9 282.1 507.2 289.0 506.4 296.0 506.6 310.0 509.0 323.9 513.6 337.2 519.4 386.8 545.9 406.9 555.1 416.7 558.5 424.9 560.7 445.7 563.4 445.6 564.6 443.1 567.3 419.8 587.6 408.7 598.0 402.2 605.3 397.6 612.4 395.3 617.4 393.9 622.6 393.4 627.7 393.7 632.7 394.7 636.9 396.6 640.3 398.9 642.4 402.2 643.8 406.1 644.0 411.4 643.1 417.3 640.9 423.6 637.6 436.7 628.2 449.2 616.0 460.5 602.0 466.3 593.1 469.9 586.3 473.3 577.9 474.6 572.4 474.6 568.1 473.2 565.2 470.3 563.8 466.3 564.0 461.1 565.5 455.2 568.2 439.9 577.0 412.1 595.3 398.6 605.0 389.2 613.3 383.4 620.3 374.8 634.2 370.5 639.0 364.1 643.2 355.9 645.5 350.3 645.7 344.9 645.0 339.1 643.2 334.1 640.8 325.2 634.2 320.4 628.9 317.2 624.2 314.5 619.1 312.4 613.5 311.0 607.8 310.5 602.1 310.9 596.6 312.3 591.7 314.6 587.5 317.7 584.2 322.8 581.3 330.4 580.1 338.4 581.2 346.3 584.0 356.2 589.4 364.4 595.7 371.4 602.8 377.2 611.1 380.7 619.1 382.1 626.8 381.9 634.4 379.8 641.5 376.3 646.8 371.1 651.1 364.6 654.0 356.5 655.4 349.7 655.3 343.0 654.0 337.1 652.1 330.8 649.0 324.3 644.5 319.3 640.1 314.6 634.8 310.3 628.6 306.6 621.5 303.7 613.8 302.0 605.8 301.5 600.4 302.0 592.7 303.8 585.8 305.8 581.8 309.7 576.9 312.9 574.4 318.4 572.0 322.5 571.2 328.8 571.1 335.3 572.2 341.7 574.1 355.5 580.6 369.7 590.3 381.5 601.5 388.7 610.7 397.5 626.8 400.9 631.3 405.4 634.1 410.7 634.7 414.7 634.1 419.5 632.6 429.4 627.3 440.4 618.6 449.6 609.1 458.4 597.6 465.0 585.6 467.4 577.0 467.2 573.8 466.0 571.7 462.8 570.4 458.1 571.1 452.1 573.4 443.7 577.7 431.5 585.2 417.6 594.8 408.0 602.1 401.1 608.4 394.7 616.5 390.8 625.1 389.1 635.4 388.6 651.3"/><path stroke="#33628d" d="M457.5 642.1 458.0 635.5 460.4 626.2 472.4 595.8 476.7 581.4 477.5 575.4 477.1 570.6 475.4 567.3 472.3 565.6 469.6 565.4 464.6 566.3 452.4 571.5 434.5 582.1 407.0 600.0 395.5 608.7 388.2 615.7 383.5 621.9 375.8 634.6 371.4 639.9 364.4 644.5 356.1 646.7 350.3 646.9 344.8 646.1 338.7 644.2 333.6 641.7 328.3 638.2 324.4 634.8 319.5 629.3 316.1 624.4 313.3 619.0 311.2 613.1 309.8 607.1 309.4 601.2 310.0 595.5 311.5 590.4 314.0 586.2 317.3 582.8 322.8 580.0 330.7 579.0 339.0 580.4 348.7 584.1 358.7 590.0 366.7 596.5 374.2 604.6 379.5 612.7 382.8 621.2 384.1 629.6 383.6 638.2 381.2 645.4 377.1 651.0 371.7 655.0 364.8 657.6 356.2 658.8 348.9 658.5 341.7 657.0 335.3 654.7 328.4 651.1 321.3 646.0 316.0 640.9 311.0 634.8 306.5 627.6 302.7 619.6 300.0 610.9 298.5 602.0 298.4 596.1 299.5 587.9 301.1 583.0 303.4 578.6 307.9 573.4 311.6 570.9 315.6 569.2 320.0 568.2 326.8 567.9 338.6 570.2 345.4 572.8 354.0 576.9 366.8 585.0 378.0 593.9 389.6 606.1 403.2 625.0 407.5 628.0 412.6 629.1 420.0 627.8 428.9 623.5 438.4 616.5 447.5 607.5 455.8 596.5 461.0 586.8 462.5 581.9 462.7 579.0 462.2 576.7 460.8 575.3 457.7 574.7 452.3 575.9 445.6 578.8 438.4 582.9 418.3 596.5 410.5 603.0 404.9 608.8 401.2 613.9 399.0 618.5 397.9 623.1 398.0 627.7 399.2 631.5 401.5 634.5 404.6 636.2 408.9 636.9 413.4 636.3 418.1 634.8 428.1 629.6 439.2 621.1 448.9 611.4 458.3 599.4 465.8 586.6 468.9 577.0 469.1 573.3 468.1 570.7 466.0 569.2 461.6 569.1 455.8 570.9 448.9 574.1 427.1 587.5 405.1 603.4 397.0 611.1 391.3 618.9 388.1 626.3 383.4 642.4 379.6 649.4 376.2 652.8 372.4 655.4 368.0 657.4 362.4 658.9 356.3 659.5 350.2 659.3 344.7 658.4 338.5 656.6 328.2 651.7 322.8 647.9 317.4 643.1 308.9 632.7 304.5 625.1 302.1 619.6 298.7 607.7 297.8 595.7"/><path stroke="#2f6b8e" d="M444.3 643.6 441.3 641.0 439.6 638.2 439.0 635.2 439.6 631.1 443.5 622.9 457.4 600.8 462.9 589.6 464.7 583.8 465.3 579.0 464.3 575.7 462.6 574.2 460.1 573.7 456.8 574.0 448.7 577.0 437.8 582.9 423.0 592.7 412.4 600.7 404.8 607.6 399.6 614.2 396.6 620.6 395.4 627.1 396.3 633.4 398.9 637.8 403.2 640.3 408.9 640.6 415.5 639.0 423.1 635.5 431.4 630.1 441.1 622.1 450.1 612.8 457.6 603.5 464.4 593.3 469.5 583.1 471.8 576.0 472.2 571.6 471.8 569.3 470.8 567.6 469.3 566.6 466.0 566.1 461.7 566.9 450.8 571.7 430.5 584.0 406.1 600.8 396.0 609.1 389.6 616.1 385.3 622.8 378.3 636.9 374.1 642.6 371.0 645.3 367.2 647.7 363.1 649.3 358.1 650.4 353.3 650.8 347.7 650.4 337.3 647.5 331.6 644.5 327.2 641.6 318.6 633.4 314.7 628.1 311.3 622.2 307.2 611.2 306.0 604.3 305.8 599.7 306.5 593.3 307.6 589.3 310.2 584.2 313.8 580.2 318.3 577.4 325.1 575.6 330.6 575.5 338.2 576.9 345.6 579.5 354.1 583.8 361.6 588.6 369.1 594.6 375.9 601.3 380.8 607.5 384.2 613.1 386.9 618.8 392.6 638.1 395.4 643.5 397.3 645.3 399.9 646.5 402.9 647.0 406.8 646.7 411.8 645.4 418.1 642.8 424.9 638.9 431.5 634.3 445.6 621.9 457.6 608.1 468.6 591.6 472.4 584.4 475.2 577.5 476.7 571.5 476.9 566.7 475.5 563.4 472.6 561.8 469.9 561.7 464.9 562.8 454.4 567.6 437.9 577.5 405.8 598.5 394.3 606.7 385.9 614.0 380.5 620.2 372.5 631.3 368.4 635.7 362.6 639.6 355.6 641.7 346.6 641.6 341.4 640.3 337.0 638.5 332.5 635.9 328.0 632.3 320.8 624.0 317.5 618.1 315.7 613.3 314.5 608.4 314.1 603.5 314.7 597.3 316.0 593.2 318.1 589.7 320.9 587.0 325.5 584.7 330.7 583.7 337.6 584.3 344.6 586.4 352.4 590.4 359.1 595.0 365.5 600.8 370.2 606.5 373.8 612.7 375.9 618.4 376.9 624.8 376.4 630.6 374.7 635.7 371.6 640.2 367.6 643.7 362.0 646.4 355.5 647.7 348.4 647.6 341.4 646.1 333.6 642.7 326.9 638.1 320.3 631.6 315.6 625.1 311.9 617.6"/><path stroke="#2c738e" d="M379.6 697.1 356.4 695.7 346.7 694.5 337.2 692.3 326.2 688.3 313.7 681.5 303.7 673.8 293.4 663.4 286.7 654.7 277.6 639.1 272.5 627.1 268.5 614.0 266.0 600.4 265.2 586.7 266.2 573.6 269.1 561.6 273.8 551.4 276.8 547.1 283.8 540.3 287.7 537.7 296.3 534.3 305.5 533.1 315.0 533.7 324.6 535.8 334.0 538.9 343.1 542.6 355.8 548.8 401.7 574.4 429.9 588.5 431.5 590.2 431.6 592.0 425.2 603.2 424.7 606.0 425.7 607.6 427.6 607.9 430.2 607.1 436.4 603.0 441.0 597.3 441.8 594.9 441.3 593.4 439.4 593.2 436.2 594.3 429.2 599.2 426.5 602.0 424.8 604.8 424.5 606.8 425.4 608.1 427.4 608.4 430.2 607.6 436.7 603.1 441.6 597.0 442.4 594.4 441.9 593.0 439.9 592.7 436.6 593.8 428.7 599.3 425.9 602.3 424.2 605.2 423.9 607.3 424.9 608.7 427.0 608.9 430.0 608.1 437.0 603.3 440.0 600.0 442.2 596.7 443.0 594.0 442.4 592.5 440.3 592.2 436.7 593.4 432.5 595.9 428.3 599.3 425.3 602.5 423.6 605.3 423.2 607.8 424.3 609.3 426.5 609.6 429.7 608.7 433.5 606.5 437.1 603.6 440.4 600.1 442.7 596.5 443.6 593.6 443.0 592.0 440.8 591.6 436.9 593.0 432.4 595.6 427.9 599.3 424.7 602.6 422.8 605.9 422.5 608.5 423.8 610.0 426.2 610.2 429.6 609.2 433.3 607.1 437.1 604.1 440.6 600.3 443.3 596.5 444.3 593.2 443.8 591.4 440.7 591.1 435.3 593.4 429.2 597.7 424.5 602.3 422.0 606.5 422.0 609.7 424.3 611.0 428.6 610.2"/><path stroke="#297b8e" d="M356.2 722.6 344.2 722.0 333.0 719.8 322.7 716.6 310.7 711.2 301.9 706.0 292.5 699.0 282.8 690.1 273.0 678.7 263.5 664.8 259.0 656.9 251.0 639.0 247.6 629.3 242.4 608.5 240.7 597.6 239.8 586.8 239.7 576.0 240.4 565.5 241.9 555.4 244.2 546.0 247.3 537.4 251.2 529.7 255.7 523.0 260.9 517.4 266.5 513.0 272.6 509.6 279.1 507.3 285.8 506.0 292.7 505.7 299.7 506.2 306.7 507.4 320.6 511.4 340.5 520.0 384.6 543.6 405.2 553.3 415.3 557.0 423.8 559.4 432.8 561.1 445.1 562.5 445.5 563.0 445.3 564.0 442.9 566.8 417.4 589.3 407.6 598.7 400.8 606.7 396.5 613.6 394.3 619.1 393.1 625.2 392.9 631.4 393.8 636.7 395.5 640.7 398.0 643.4 401.1 644.8 405.3 645.2 410.4 644.3 416.2 642.3 428.5 635.3 441.5 624.7 453.0 612.5 464.3 597.3 469.6 588.1 472.8 581.3 474.8 575.1 475.7 569.9 475.1 566.0 473.0 563.6 470.9 562.9 466.6 563.3 461.2 565.0 455.1 567.9 437.0 578.5 407.9 597.8 395.3 606.9 387.3 614.2 382.1 620.5 374.0 632.7 369.7 637.6 363.3 641.8 356.0 643.9 350.6 644.2 345.5 643.6 339.9 642.0 335.1 639.8 326.7 633.7 322.1 628.9 319.0 624.6 315.5 618.1 313.6 612.8 312.4 607.4 312.0 602.1 312.4 597.0 313.8 592.4 316.0 588.5 319.0 585.4 323.8 582.7 331.0 581.6 338.6 582.6 346.0 585.2 355.5 590.4 363.4 596.4 370.1 603.3 375.2 610.6 378.2 617.3 379.8 624.6 379.7 631.5 377.9 638.0 374.6 643.3 369.8 647.5 363.5 650.5 356.6 651.8 350.3 651.9 344.2 650.9 337.3 648.7 331.5 645.7 325.5 641.6 321.0 637.5 315.3 630.8 311.6 624.9 308.5 618.4 306.2 611.4 304.9 604.2 304.8 597.1 306.0 590.6 307.4 586.7 310.4 581.7 314.5 578.0 317.7 576.3 322.9 574.7 328.6 574.3 334.4 575.0 340.3 576.5 347.8 579.5 361.0 587.1 373.4 597.3 382.6 608.1 387.8 617.2 393.9 633.8 396.9 639.0 401.2 642.1 406.9 642.8 411.5 642.0 416.5 640.3 427.1 634.5 439.4 625.0 450.3 614.0 461.2 600.0 468.9 587.0 471.7 580.7 473.4 575.1 473.8 570.4 473.0 567.0 470.8 565.1 467.4 564.6 462.8 565.5 455.4 568.6 436.2 579.7 408.7 598.1 396.8 607.1 388.6 615.0 383.6 621.8 376.4 634.6 372.5 639.5 367.2 643.7 360.5 646.5"/><path stroke="#25838e" d="M343.1 671.6 335.5 669.3 326.9 665.5 320.1 661.2 313.0 655.5 305.9 648.2 301.4 642.4 295.2 632.3 291.7 624.7 287.6 612.3 286.0 603.7 285.3 595.1 285.7 586.7 287.2 578.9 289.7 572.0 293.3 566.1 297.7 561.3 300.2 559.4 305.6 556.6 311.6 555.0 317.9 554.5 324.3 554.9 330.8 556.2 343.5 560.5 357.9 567.5 374.7 577.7 393.0 590.9 413.7 608.4 417.4 610.6 420.6 611.7 424.9 611.7 429.0 610.6 434.0 607.9 438.5 604.3 442.9 599.5 446.1 594.6 447.1 590.6 445.9 588.7 442.4 588.8 436.7 591.2 430.0 595.6 423.8 600.9 420.1 605.5 418.5 609.4 419.0 612.4 421.3 613.9 424.9 613.7 429.6 611.9 434.6 608.8 439.8 604.2 444.4 598.8 447.5 593.5 448.2 589.7 447.8 588.5 446.8 587.8 442.8 588.0 436.6 590.7 429.3 595.5 422.8 601.2 418.9 606.1 417.2 610.2 417.7 613.4 420.5 615.1 424.3 614.8 429.5 612.9 434.8 609.4 440.4 604.5 445.4 598.5 448.4 593.3 449.4 589.1 449.0 587.6 448.0 586.8 443.8 586.9 437.0 589.9 428.4 595.6 421.5 601.7 417.5 606.8 415.7 611.5 416.5 614.8 419.6 616.5 423.7 616.2 429.2 614.0 435.0 610.2 441.1 604.8 446.5 598.3 449.8 592.5 450.8 587.9 449.5 585.7 447.8 585.3 445.0 585.7 437.6 588.9 428.1 595.1 420.5 601.7 416.1 607.2 414.1 612.2 414.1 614.2 414.8 616.1 416.4 617.5 418.3 618.1 423.3 617.6 429.3 615.1 435.7 610.9 441.6 605.6 447.6 598.3 451.3 591.9 452.4 586.7 451.9 585.1 451.0 584.3 449.1 583.8 445.9 584.3 437.7 588.0 427.3 594.9 418.6 602.6 413.8 608.8 412.1 614.0 412.2 616.1 413.1 618.0 414.8 619.4 416.9 620.0 422.9 619.4 430.2 616.1 437.3 611.0 444.5 603.9 450.7 595.6 454.1 587.9 454.3 585.3 453.7 583.4 452.2 582.4 449.9 582.2"/><path stroke="#228c8d" d="M410.7 719.7 404.9 714.8 400.5 708.7 399.5 703.9 400.9 699.5 406.7 692.7 432.8 670.0 448.5 654.4 464.3 636.1 481.7 612.1 492.0 595.1 498.4 583.1 504.1 571.0 508.7 559.2 512.0 548.3 513.6 538.9 513.3 531.6 512.4 528.8 510.9 526.8 509.0 525.4 506.6 524.8 500.3 525.5 492.4 528.9 478.2 537.5 440.9 564.3 420.9 577.7 403.2 587.9 388.3 594.7 373.1 599.6 365.8 601.0 357.8 601.6 350.3 601.1 345.2 599.7 341.4 597.4 340.7 596.2 341.0 595.3 342.7 595.0 345.4 595.7 351.6 599.6 356.7 605.0 360.3 611.5 361.6 617.3 360.9 622.4 358.3 626.6 354.0 629.5 347.9 630.5 341.2 629.0 334.9 625.4 329.9 620.1 326.3 613.4 325.0 606.3 326.2 600.7 327.8 598.2 330.0 596.3 332.7 595.1 336.6 594.6 343.9 596.1 352.1 600.9 358.6 607.6 360.7 611.1 362.3 615.1 362.8 618.3 362.6 621.8 361.6 625.0 359.8 627.7 357.2 629.9 354.4 631.3 347.8 632.2 341.3 630.7 334.4 626.9 328.8 621.2 324.8 613.7 323.4 606.7 323.6 602.9 324.7 599.5 326.0 597.4 328.3 595.1 331.2 593.7 335.3 593.0 338.9 593.2 343.5 594.4 347.8 596.4 352.6 599.5 356.6 603.0 360.3 607.3 362.5 611.1 364.2 615.3 364.8 619.3 364.6 623.0 363.5 626.3 361.7 629.2 359.0 631.6 355.5 633.3 348.4 634.3 340.5 632.5 332.9 627.9 326.8 621.4 324.4 617.3 322.6 612.9 321.3 605.0 321.9 600.8 322.9 598.1 324.4 595.7 327.0 593.2 330.3 591.6 335.0 591.0 339.0 591.4 344.0 592.8 348.8 595.1 354.0 598.6 358.4 602.4 362.3 607.1 364.7 611.1 366.5 615.6 367.2 619.8 367.0 624.2 365.7 628.2 363.7 631.2 360.4 634.0 356.6 635.8 352.7 636.7 348.1 636.8 343.9 636.1 339.3 634.5 331.8 629.9 328.2 626.5 325.0 622.5 320.6 614.1 319.3 608.9 318.9 605.1 319.3 600.2 320.4 596.9 322.0 594.1 324.9 591.2 328.6 589.3 333.9 588.5 338.4 589.0 344.1 590.6 349.5 593.2 355.2 597.0 360.1 601.2 364.5 606.3 367.5 611.3 369.4 616.0 370.3 620.5 370.2 625.1 369.1 629.3 366.9 633.1 363.7 636.2 360.0 638.4 353.1 640.1 345.2 639.6 338.1 637.3 330.6 632.6 324.6 626.6 319.6 618.9 316.8 611.5 315.7 603.9 316.6 596.9 318.8 592.2 323.0 588.0 328.6 585.7 334.9 585.5 342.8 587.3 351.4 591.3 358.8 596.5"/><path stroke="#1f948c" d="M385.8 707.5 373.3 705.0 344.7 700.3 336.4 698.2 327.2 694.9 317.1 690.0 306.3 682.9 298.8 676.6 291.2 668.8 280.2 654.2 273.5 642.4 267.8 629.1 263.3 614.6 260.5 599.3 259.6 584.0 260.9 569.4 262.3 562.5 264.3 556.1 269.7 545.0 273.1 540.4 276.9 536.5 281.1 533.2 285.6 530.7 295.2 527.6 305.5 526.9 316.0 528.1 331.6 532.7 351.1 541.4 403.3 569.4 415.7 575.1 430.7 580.9 433.5 582.5 434.3 584.2 433.5 586.6 422.7 599.5 419.0 605.7 418.1 610.4 418.8 612.4 420.2 613.4 423.7 613.8 428.2 612.5 433.0 609.8 438.2 605.7 443.1 600.5 446.7 595.0 448.2 590.9 447.5 588.2 446.3 587.7 444.2 587.7 438.4 589.8 431.1 594.2 424.6 599.5 420.0 604.5 417.6 608.9 417.3 612.3 419.2 614.6 422.8 615.1 428.0 613.6 433.2 610.6 438.8 606.1 444.0 600.4 447.6 595.0 449.3 590.3 448.8 587.3 447.6 586.6 445.3 586.6 439.0 588.9 431.0 593.7 423.4 599.8 418.6 605.2 416.1 609.8 416.0 613.6 416.8 615.0 418.1 616.0 422.1 616.4 427.7 614.7 433.3 611.5 439.3 606.5 445.0 600.3 448.9 594.4 450.7 589.3 450.7 587.4 450.0 586.1 448.6 585.4 446.0 585.5 438.9 588.2 430.2 593.6 422.0 600.2 417.0 605.9 414.5 610.7 414.3 614.9 415.3 616.6 416.8 617.6 421.5 618.0 427.0 616.3 433.0 612.8 439.6 607.4 445.9 600.5 450.2 593.9 452.3 588.2 452.3 586.1 451.5 584.7 449.9 584.0 447.0 584.1 439.1 587.3 428.7 593.9 420.1 601.1 414.9 607.0 412.3 612.5 412.5 616.7 413.7 618.5 415.3 619.5 420.4 619.9 426.3 618.1 432.8 614.3 440.1 608.4 447.0 600.8 451.9 593.4 454.2 587.0 454.2 584.6 453.5 583.3 452.0 582.4 449.6 582.3 442.1 584.8 431.4 591.1 421.1 599.0 415.0 605.1 411.0 610.9 409.7 616.2 410.0 618.3 411.1 620.3"/><path stroke="#1e9d89" d="M424.4 702.8 458.5 662.4 474.3 641.9 491.6 616.1 504.7 593.3 512.8 577.1 519.9 560.7 525.5 544.9 527.5 537.5 529.9 524.5 530.1 519.1 529.6 514.5 528.3 511.0 526.3 508.5 523.6 507.2 520.1 506.9 516.0 507.7 505.9 512.3 487.3 524.9 445.7 557.5 425.8 571.8 407.8 582.9 396.9 588.5 387.0 592.7 378.0 595.6 366.2 598.0 356.2 598.5 345.5 596.8 337.7 593.4 334.8 591.2 331.7 587.9 330.3 585.6 329.4 582.4 329.7 579.6 331.0 577.5 335.1 575.5 340.7 575.6 348.4 578.1 356.1 582.4 364.2 588.5 370.9 595.0 376.6 602.2 381.4 610.4 384.3 618.4 385.9 626.5 386.3 635.8 385.4 644.3 383.5 650.1 380.5 654.6 376.3 658.3 370.3 661.2 364.0 662.9 357.9 663.6 351.7 663.5 344.4 662.4 337.7 660.5 330.4 657.3 324.6 653.8 318.7 649.3 312.8 643.5 309.0 639.0 303.8 631.2 300.7 625.3 297.0 615.7 295.3 609.0 294.3 602.2 294.0 595.5 295.1 585.9 296.9 580.2 299.4 575.3 304.5 569.3 308.7 566.5 315.7 564.0 323.4 563.4 331.3 564.3 339.2 566.5 346.7 569.4 356.2 574.2 366.5 580.5 376.6 587.8 386.8 596.4 393.8 603.6 404.0 615.7 407.7 619.3 412.5 622.0 418.0 622.4 424.7 620.7 432.1 616.7 439.3 611.1 446.6 603.6 452.8 595.1 456.2 587.9 456.9 582.5 456.2 581.0 454.4 579.9 451.7 579.9 447.1 581.1 435.0 587.4 421.5 597.0 411.6 606.4 408.7 610.5 406.9 614.2 406.1 617.5 406.3 620.7 407.5 623.4 409.6 625.3 412.8 626.3 416.5 626.3 424.1 624.0 432.0 619.5 440.0 613.0 448.3 604.4 455.4 594.4 459.4 586.0 460.2 582.1 460.0 579.8 459.1 578.1 457.5 577.2 454.4 577.1 449.2 578.5 435.2 585.9 418.7 597.6 412.6 602.9 407.5 608.3 404.5 612.6 402.5 617.0 401.7 621.4 402.1 625.2 403.6 628.2 406.3 630.5 409.6 631.5 414.1 631.4 422.4 628.8 432.3 623.0 441.6 615.2 451.3 604.7 458.8 594.0 463.7 583.7 464.7 578.8 464.5 576.0 463.4 574.0 461.4 573.0 456.3 573.4 449.5 575.9 440.2 580.9 427.8 588.8 415.9 597.4 407.9 604.0 402.2 609.9 398.1 615.6 395.2 623.0 394.6 630.2 396.2 636.7 397.8 639.1 399.7 640.7 404.4 642.3 410.9 641.7 418.4 639.1 427.1 634.2"/><path stroke="#21a585" d="M372.0 682.7 378.1 686.8 383.9 689.7 388.2 690.5 392.5 689.3 409.1 678.7 422.8 668.7 436.7 656.9 449.1 644.6 460.4 631.7 472.5 615.9 481.5 602.3 490.0 587.5 497.3 572.4 502.4 558.2 504.7 546.2 504.4 540.2 502.4 536.2 498.8 534.2 493.7 534.5 487.2 536.7 479.6 540.6 471.2 545.7 422.4 578.8 410.8 585.8 397.2 593.0 383.2 599.1 368.6 603.6 356.5 605.7 345.5 605.5 348.6 609.4 350.0 613.2 349.5 616.6 347.2 618.7 344.9 619.0 342.3 618.4 339.9 617.0 337.9 614.8 336.7 612.3 336.3 609.7 337.0 607.8 338.5 606.3 340.8 605.8 343.7 606.4 346.4 608.0 348.7 610.5 349.9 613.0 350.1 615.7 349.2 617.8 347.4 619.1 345.0 619.4 342.2 618.8 339.7 617.3 337.6 615.0 336.3 612.3 335.9 609.5 336.6 607.4 338.3 605.9 340.7 605.4 343.8 606.1 346.7 607.8 348.9 610.2 350.3 612.8 350.6 615.7 349.7 618.0 347.7 619.5 345.1 619.9 342.2 619.2 339.5 617.6 337.3 615.2 335.8 612.3 335.5 609.4 336.2 607.1 338.0 605.5 340.6 604.9 343.9 605.7 346.9 607.5 349.3 610.1 350.7 612.9 351.1 615.9 350.1 618.3 348.1 619.9 345.4 620.4 342.2 619.7 339.4 618.0 337.0 615.5 335.4 612.4 335.0 609.2 335.7 606.8 337.6 605.0 340.4 604.5 343.9 605.2 347.1 607.2 349.9 610.2 351.3 613.2 351.6 616.3 350.5 618.8 348.2 620.5 345.3 620.9 342.0 620.1 339.0 618.3 336.5 615.5 334.8 612.2 334.4 609.1 335.2 606.5 337.2 604.6 341.3 604.0 346.0 605.9 350.1 609.7 352.1 614.1"/><path stroke="#26ad81" d="M400.0 656.4 406.6 656.5 413.0 655.6 419.4 653.6 428.2 649.3 437.6 642.9 445.0 636.7 452.9 629.1 461.0 620.1 469.3 609.7 477.2 598.2 484.5 585.8 490.6 573.4 494.8 561.8 496.3 555.1 496.3 547.2 494.6 543.8 491.6 542.0 487.4 541.9 482.0 543.4 475.8 546.2 461.3 554.8 430.6 575.3 413.4 586.1 396.3 595.6 381.3 602.6 346.6 615.2 343.5 615.1 341.1 613.7 340.0 611.2 341.2 609.5 343.7 609.8 345.9 611.9 346.2 614.3 344.6 615.6 342.2 615.1 340.3 613.2 339.8 610.8 341.0 609.3 343.7 609.6 346.0 611.8 346.4 614.4 344.6 615.8 342.2 615.3 340.1 613.3 339.6 610.7 340.9 609.1 343.7 609.4 346.2 611.8 346.6 614.5 344.8 616.0 342.2 615.5 339.9 613.3 339.4 610.6 340.8 608.9 343.8 609.3 346.4 611.7 346.8 614.8 346.0 615.8 344.8 616.3 342.0 615.6 339.7 613.3 339.1 610.5 340.6 608.7 343.8 609.0 346.6 611.6 347.2 613.3 347.0 614.9 346.2 616.0 344.9 616.5 343.0 616.3 341.2 615.3 339.0 612.0 339.0 610.1 339.8 608.9 341.2 608.3 343.1 608.5"/><path stroke="#31b57b" d="M433.7 668.8 429.6 666.2 426.8 662.3 426.4 659.3 427.4 655.1 432.1 647.9 449.7 627.4 459.2 615.4 466.8 604.4 474.0 592.4 479.7 580.5 483.3 569.6 484.0 565.0 483.9 561.2 483.0 558.3 481.2 556.4 476.9 555.5 470.9 556.8 463.7 559.9 452.8 566.0 385.4 608.5 376.0 615.5 362.9 627.5 358.9 630.0 354.4 631.7 347.0 632.1 340.2 630.3 334.0 626.5 328.4 620.6 324.5 613.0 323.3 606.0 324.5 599.7 326.3 596.8 328.7 594.7 331.7 593.4 336.0 592.9 340.5 593.5 345.0 595.0 349.3 597.2 353.9 600.4 357.7 604.0 361.1 608.4 363.1 612.1 364.5 616.3 365.0 620.3 364.4 624.4 363.0 627.5 360.8 630.2 357.8 632.4 354.0 633.9 350.1 634.4 346.5 634.2 339.1 632.0 332.4 627.6 326.4 620.9 324.0 616.7 322.3 612.2 321.3 604.3 321.9 600.2 323.0 597.4 324.6 595.1 327.4 592.8 330.8 591.4 335.6 590.9 340.7 591.6 345.7 593.4 351.3 596.5 356.1 600.2 360.1 604.1 363.6 608.8 365.9 613.4 367.1 617.8 367.4 621.9 366.7 626.1 364.9 629.8 362.1 633.0 358.7 635.2 354.5 636.6 350.2 637.0 346.1 636.7 338.0 634.0 330.4 628.9 326.9 625.2 323.8 621.0 319.9 612.3 318.9 607.0 318.8 603.2 320.4 596.4 322.1 593.6 325.2 590.8 328.9 589.1 334.3 588.4 340.1 589.2 345.7 591.2 352.0 594.6 357.5 598.6 362.5 603.7 366.3 608.8 368.8 613.7 370.3 618.9 370.5 623.7 369.7 628.1 367.6 632.4 364.7 635.7 360.6 638.3 356.1 639.9 351.4 640.4 346.9 640.1 342.1 639.0 336.8 636.9 332.6 634.3 328.3 630.9 321.6 622.9 318.6 617.3 317.0 612.8 315.5 603.6 316.1 597.9 317.5 594.1 319.5 590.9 322.1 588.3 326.3 586.1 332.5 585.2 339.1 586.0 345.6 588.2 352.9 592.0 359.1 596.6 364.9 602.1 369.7 608.4 372.8 614.3 374.5 620.5 374.8 626.0 373.7 631.5 371.3 636.4 367.8 640.1 362.9 643.1 357.2 644.9 351.9 645.3 346.8 644.9 341.2 643.5 336.4 641.6 331.4 638.7 326.4 634.8 321.6 629.8 318.3 625.3 314.7 618.6 312.6 613.1 311.3 607.5 310.9 601.9 311.4 596.5 312.8 591.7 315.1 587.7 318.2 584.5 321.9 582.2 327.6 580.7 332.2 580.6 338.6 581.6 344.8 583.7 352.1 587.3 358.6 591.5 364.2 596.0 373.2 605.6 376.8 611.3 379.2 616.5 380.8 621.9 381.6 627.5 381.3 633.0 380.1 638.4"/><path stroke="#3fbc73" d="M443.5 663.8 442.1 660.7 441.5 655.8 442.4 650.7 444.5 645.1 448.9 637.0 469.9 603.2 476.3 590.9 481.2 579.0 483.5 571.0 484.1 564.4 483.0 559.7 481.2 557.7 476.9 556.7 471.1 557.8 464.0 560.7 453.2 566.5 387.6 607.9 377.1 615.8 363.1 628.8 359.1 631.3 354.4 633.0 346.6 633.3 339.4 631.1 332.9 626.9 327.1 620.4 323.2 612.2 322.2 604.7 322.8 600.7 323.8 598.1 325.3 595.9 327.9 593.7 331.1 592.3 335.7 591.7 340.5 592.4 345.3 594.1 349.9 596.4 354.7 599.9 358.7 603.7 362.2 608.2 364.6 612.7 366.0 617.0 366.4 621.1 365.7 625.3 364.0 628.9 361.7 631.7 358.5 633.9 354.5 635.3 350.4 635.9 346.5 635.6 338.7 633.2 331.6 628.6 325.1 621.2 321.2 613.1 319.8 604.5 320.4 600.0 321.5 596.9 323.1 594.4 326.0 591.7 329.6 590.1 334.8 589.5 340.2 590.2 345.6 592.1 351.6 595.3 356.8 599.2 361.0 603.4 364.8 608.3 367.3 613.1 368.9 618.3 369.2 623.0 368.4 627.3 366.5 631.2 363.7 634.4 359.7 637.0 355.2 638.4 350.7 638.9 346.4 638.6 337.7 635.8 329.6 630.3 323.2 623.0 318.6 613.7 317.3 608.0 317.0 603.7 317.6 598.4 318.9 594.9 320.8 591.9 323.2 589.6 327.2 587.5 333.0 586.6 339.2 587.4 345.4 589.4 352.2 593.0 358.1 597.3 363.7 602.6 368.3 608.7 371.1 614.5 372.6 619.8 372.9 625.3 371.8 630.2 369.6 634.6 366.1 638.3 361.8 640.9 356.2 642.6 351.1 643.0 346.3 642.6 341.0 641.2 336.4 639.3 331.7 636.5 327.1 632.8 322.7 628.1 319.7 624.0 316.4 617.8 314.6 612.8 313.4 607.6 313.0 602.5 313.8 596.1 315.4 591.9 317.7 588.4 320.7 585.7 325.6 583.5 332.5 582.7 339.8 583.9 346.9 586.6 354.7 590.9 362.4 596.7 369.0 603.5 373.5 609.9 376.6 616.6 378.2 623.3 378.2 629.8 376.7 635.5 373.8 640.6 369.8 644.6 363.9 647.8 357.5 649.4 351.7 649.7 346.0 649.1 339.7 647.4 334.2 645.0 328.6 641.5 324.3 638.0 318.8 632.3 315.1 627.2 311.8 621.4 309.3 615.1 307.5 608.4 306.8 601.8 307.2 595.4 308.7 589.7 311.2 584.8 314.7 580.9 319.0 578.3 323.9 576.8 329.2 576.4 334.7 577.0 340.2 578.3 347.2 581.1 353.8 584.5 361.1 589.2 372.4 598.9 377.3 604.4 381.4 610.3 384.2 615.6 386.6 621.7 389.5 635.5"/><path stroke="#50c46a" d="M410.1 660.0 416.4 658.3 425.0 654.4 431.8 650.2 439.1 644.8 446.8 638.0 454.9 629.8 463.4 620.1 471.9 608.9 485.3 587.7 491.9 574.5 495.4 566.0 498.6 554.5 499.2 548.3 498.4 543.6 496.2 540.5 492.6 539.3 487.7 539.9 481.6 542.0 474.7 545.6 463.1 552.7 419.5 581.7 403.2 591.2 389.7 597.9 372.2 604.9 348.8 611.3 344.2 613.4 342.3 612.9 342.0 612.0 342.4 611.4 344.0 612.2 344.2 613.1 343.7 613.6 342.1 612.7 341.9 611.9 342.4 611.3 344.1 612.1 344.3 613.1 343.7 613.6 342.0 612.8 341.8 611.8 342.3 611.3 344.1 612.1 344.4 613.1 343.8 613.7 342.0 612.8 341.8 611.8 342.3 611.2 344.2 612.1 344.4 613.2 343.8 613.8 341.9 612.8 341.7 611.8 342.2 611.1 343.3 611.2 344.3 612.1 344.5 613.2 343.9 613.9 342.1 613.2 341.7 611.4"/><path stroke="#63cb5f" d="M366.3 641.1 368.3 644.4 368.8 647.2 368.1 649.4 365.9 651.7 362.5 653.5 358.6 654.5 353.8 655.0 348.1 654.7 340.1 652.8 331.0 648.7 322.9 643.0 315.0 634.9 309.4 626.5 306.0 619.3 302.9 609.0 301.9 601.0 302.7 591.0 304.9 584.4 308.3 579.1 312.9 575.1 316.4 573.3 322.2 571.7 326.3 571.5 332.7 572.1 339.0 573.6 345.3 575.9 358.4 582.7 371.7 592.4 382.5 603.2 389.0 612.2 397.0 627.4 400.3 631.9 404.6 634.8 409.7 635.6 413.5 635.2 418.2 633.8 428.0 628.8 438.9 620.6 448.3 611.2 457.5 599.7 464.7 587.3 468.0 578.0 468.1 574.3 467.3 571.7 465.4 570.2 461.3 569.9 455.8 571.4 449.2 574.4 428.0 587.2 407.4 602.2 397.7 611.4 392.1 619.7 389.0 628.0 385.1 647.3 383.3 651.7 380.9 655.2 376.0 659.3 369.6 662.2 362.0 663.9 354.1 664.3 345.6 663.3 337.3 661.0 329.9 657.6 322.0 652.6 316.0 647.5 310.1 641.2 304.6 633.6 299.9 624.7 296.2 614.9 294.0 604.6 293.5 594.3 294.1 587.8 296.7 579.1 299.4 574.1 302.8 570.0 309.0 565.6 316.2 563.3 321.4 562.8 326.7 563.1 332.1 564.0 340.0 566.3 352.5 571.7 365.5 579.3 377.6 587.9 391.5 600.3 407.4 617.9 411.2 620.5 415.6 621.7 421.7 621.1 428.3 618.4 435.9 613.4 443.1 606.9 449.7 598.9 454.6 590.8 455.9 587.1 456.4 584.1 455.8 581.9 454.7 580.9 452.4 580.4 448.4 581.1 438.1 585.9 424.4 595.1 413.8 604.6 408.8 611.5 407.4 614.9 407.0 618.0 407.4 620.7 408.8 623.1 411.2 624.7 414.2 625.4 420.6 624.5 428.3 621.1 436.7 615.2 444.7 607.7 452.2 598.5 457.6 588.9 459.3 582.1 458.7 579.5 457.5 578.3 454.8 577.8 450.2 578.7 438.3 584.5 421.7 595.7 410.3 605.9 404.8 613.8 403.4 617.4 403.0 620.7 403.4 624.0 405.0 627.0 407.3 628.9 410.2 629.8 415.8 629.7 421.7 627.9 428.0 624.7 435.2 619.6 442.1 613.7 449.0 606.3 454.5 599.2 459.0 591.9"/><path stroke="#77d153" d="M367.6 717.4 347.1 714.1 335.3 711.3 321.4 706.3 309.6 700.2 296.7 691.0 287.8 682.8 278.9 672.5 270.3 660.1 262.4 645.5 255.8 628.9 250.9 610.7 248.2 591.7 248.1 572.9 249.1 563.9 250.8 555.4 253.2 547.4 256.2 540.2 259.9 533.8 264.1 528.3 268.9 523.7 274.0 520.0 279.6 517.2 285.4 515.4 291.4 514.3 297.6 514.1 310.1 515.5 322.6 518.9 340.6 526.3 389.0 552.0 406.4 560.1 421.9 565.7 440.1 570.1 440.9 571.5 439.1 574.3 415.9 596.7 410.3 603.3 406.2 609.7 403.9 616.3 404.0 621.8 405.0 624.3 406.3 626.1 408.2 627.5 410.6 628.4 413.6 628.6 417.3 628.1 425.9 624.8 435.8 618.2 444.7 610.1 453.2 599.8 459.7 588.8 461.6 583.9 462.1 580.7 461.7 577.5 460.5 576.0 457.6 575.2 453.6 575.8 447.4 578.3 440.4 581.9 430.5 588.1 420.3 595.3 413.1 601.1 407.0 607.0 403.3 611.6 400.8 615.8 399.3 620.1 398.8 624.0 399.2 627.9 400.8 631.4 403.2 633.8 406.7 635.2 410.4 635.5 415.0 634.7 424.7 630.7 434.9 623.8 445.3 614.3 455.9 601.7 463.6 589.4 466.5 582.7 467.7 578.3 468.0 574.7 467.2 572.0 464.5 570.1 460.2 570.2 454.4 572.1 446.0 576.2 433.6 583.7 420.5 592.4 408.9 601.1 401.4 607.6 395.8 613.9 391.8 620.7 389.1 628.8 386.5 644.5 385.0 650.4 382.2 655.6 377.5 659.9 373.1 662.3 368.4 664.0 357.9 665.6 347.1 664.8 335.2 661.4 327.5 657.6 321.4 653.6 311.2 644.1 305.4 636.7 301.9 631.0 297.3 621.5 295.0 614.6 292.8 603.9 292.3 596.8 292.6 589.9 293.8 583.5 295.9 577.6 298.7 572.6 302.3 568.5 308.8 564.1 316.4 562.0 321.7 561.6 327.2 562.0 332.7 563.0 340.9 565.5 353.6 571.3 366.8 579.1 379.0 587.8 392.1 599.1 408.2 616.3 412.1 619.0 416.0 620.1 421.8 619.7 428.8 617.0 436.1 612.1 442.9 606.0 449.7 597.6 453.8 590.2 454.8 587.0 454.9 584.4 454.1 582.6 452.9 581.8 449.1 581.8 443.8 583.6 436.8 587.3 428.8 592.5 421.8 597.9 416.2 603.1 411.9 608.3 409.5 612.9 408.8 617.5 410.2 621.1 413.5 623.1 418.3 623.3 424.0 621.7 430.3 618.5 436.5 614.0 443.0 608.0"/><path stroke="#8bd646" d="M429.4 699.8 423.1 696.4 418.2 691.6 416.4 686.9 416.3 684.6 417.3 681.2 419.2 677.6 423.3 672.3 447.4 647.0 460.7 631.4 472.2 615.8 483.7 597.8 493.9 578.4 497.9 568.8 501.0 559.8 502.9 551.7 503.3 545.0 502.2 540.0 501.1 538.2 497.7 536.2 492.8 536.2 486.6 538.2 479.4 541.7 467.1 549.2 420.0 580.9 405.6 589.2 390.5 596.7 378.5 601.5 367.6 604.8 357.6 606.7 346.0 607.6 347.9 613.4 347.5 615.4 346.0 616.6 342.8 616.6 339.7 614.2 338.5 610.8 338.9 609.3 339.9 608.3 341.6 607.9 343.5 608.4 346.8 611.0 347.8 614.5 347.2 616.0 346.1 616.9 344.4 617.2 342.5 616.7 339.4 614.2 338.2 610.6 338.7 609.0 339.8 608.0 341.4 607.6 343.5 608.1 347.0 610.9 348.2 614.5 347.5 616.2 346.3 617.2 344.6 617.5 342.5 617.0 339.2 614.4 337.9 610.5 338.4 608.9 339.6 607.7 341.3 607.4 343.4 607.8 347.2 610.7 348.2 612.7 348.5 614.8 347.8 616.5 346.4 617.5 344.6 617.8 342.4 617.3 338.9 614.4 337.9 612.4 337.6 610.3 338.0 608.7 339.3 607.5 341.1 607.0 343.4 607.5 345.6 608.7 347.4 610.5 348.5 612.6 348.8 614.8 348.1 616.7 346.8 617.8 344.8 618.1 342.5 617.7 338.8 614.7 337.6 612.5 337.2 610.3 337.8 608.4 339.1 607.1 341.5 606.7 344.3 607.5 346.9 609.5 348.6 612.0 349.2 614.6 348.5 616.8 346.7 618.2 344.2 618.4"/><path stroke="#a2da37" d="M423.2 707.5 413.2 703.8 404.9 698.2 402.7 695.9 401.1 693.0 400.7 690.6 401.4 688.3 405.9 682.9 431.3 662.2 447.7 646.5 461.7 630.4 476.9 609.8 485.7 595.5 491.2 585.5 500.1 565.6 503.0 556.4 504.7 548.3 504.8 541.7 503.3 537.1 500.2 534.5 495.5 534.1 489.3 535.8 482.0 539.2 469.4 546.8 420.7 579.9 405.7 588.6 390.0 596.3 377.5 601.1 366.2 604.2 355.0 605.7 345.4 605.4 348.6 609.2 350.1 613.0 349.7 616.6 347.4 618.7 345.1 619.1 342.5 618.6 340.0 617.2 338.0 615.1 336.6 612.5 336.2 609.9 336.8 607.8 338.3 606.3 340.6 605.7 343.5 606.2 346.3 607.8 348.5 610.1 349.9 612.6 350.3 615.3 349.5 617.6 347.6 619.1 345.2 619.6 342.4 619.0 339.9 617.5 337.7 615.3 336.2 612.5 335.8 609.7 336.4 607.5 338.0 605.9 340.5 605.3 343.6 605.9 346.5 607.6 349.1 610.2 350.4 612.9 350.7 615.8 349.8 618.1 347.7 619.6 345.1 620.0 342.1 619.3 339.4 617.7 337.1 615.2 335.7 612.2 335.3 609.5 335.9 607.2 337.7 605.4 340.3 604.8 343.6 605.5 346.8 607.3 349.5 610.1 350.9 613.0 351.2 616.0 350.2 618.5 348.1 620.1 345.4 620.5 342.2 619.8 339.3 618.1 336.8 615.5 335.2 612.3 334.8 609.4 335.4 606.9 337.3 605.0 340.1 604.3 343.6 605.0 347.0 606.9 349.9 609.9 351.4 612.9 351.8 616.1 350.8 618.8 348.5 620.5 345.7 621.1 342.3 620.4 338.9 618.4 336.3 615.5 334.7 612.1 334.3 609.0 335.0 606.4 337.1 604.4 339.4 603.8 342.4 604.1 345.4 605.4 348.4 607.6 350.5 610.0 351.9 612.9 352.4 615.7 351.9 618.1"/><path stroke="#bade28" d="M349.5 652.0 346.5 653.1 341.1 652.6 335.1 650.5 328.2 646.7 322.3 642.1 316.5 635.9 312.3 630.3 308.7 623.9 305.8 616.8 303.8 609.3 302.9 601.7 303.0 596.7 304.2 589.8 305.8 585.7 309.0 580.5 313.4 576.6 316.7 574.8 322.3 573.3 326.3 572.9 332.4 573.4 338.5 574.8 344.5 576.9 352.1 580.4 358.9 584.5 371.5 593.9 377.6 599.9 382.3 605.3 388.1 614.1 395.6 630.4 398.8 635.1 403.2 638.1 408.8 638.8 412.7 638.2 417.6 636.6 427.8 631.2 439.4 622.3 449.5 612.2 459.4 599.5 466.3 587.8 470.3 577.2 470.7 573.0 470.0 569.9 468.1 568.0 463.9 567.5 459.5 568.5 452.7 571.4 435.3 581.5 410.3 598.4 398.7 607.9 391.1 616.3 386.9 623.5 380.2 639.7 375.4 646.3 371.4 649.6 366.6 652.1 361.1 653.7 355.4 654.3 348.4 654.0 341.8 652.6 335.9 650.4 329.6 647.1 323.2 642.4 318.5 637.9 314.0 632.4 309.9 626.1 306.6 619.1 304.1 611.5 302.8 603.8 302.5 598.6 303.3 591.4 305.4 584.9 307.5 581.3 311.6 576.9 314.9 574.7 320.4 572.7 324.3 572.2 330.5 572.3 336.8 573.5 343.0 575.5 350.8 579.0 358.0 583.0 371.1 592.6 381.8 603.4 388.7 613.1 396.4 628.6 399.5 633.1 403.7 636.0 409.1 636.9 413.0 636.4 417.7 635.0 427.6 630.0 438.8 621.6 448.5 612.0 458.0 600.1 464.7 589.0 468.7 578.8 469.3 574.7 468.7 571.6 467.1 569.6 463.3 568.8 459.4 569.5 453.1 572.0 434.7 582.4 409.8 599.6 399.2 608.7 392.0 617.5 388.1 625.7 382.7 643.2 380.7 647.1 378.1 650.4 373.6 654.1 368.3 656.7 361.9 658.5 354.6 659.1 346.9 658.4 339.4 656.5 332.8 653.8 325.8 649.6 318.6 643.8 313.4 638.2 308.6 631.5 304.3 623.9 301.0 615.4 298.9 606.5 298.2 597.6 298.6 591.9 300.5 584.1 302.6 579.5 306.9 574.0 312.4 570.3 316.6 568.7 321.0 567.9 325.6 567.7 332.7 568.6 344.3 572.2 357.0 578.5 369.3 586.6 379.9 595.4 390.1 606.4 402.6 624.0 406.4 627.1 410.5 628.6 415.2 628.6 420.9 627.2 427.0 624.4 433.0 620.5 439.5 615.3 446.3 608.6 451.8 602.0 456.6 595.0"/><path stroke="#d2e21b" d="M366.3 695.6 353.9 695.4 341.8 693.6 331.7 690.6 320.0 685.4 310.3 679.3 300.2 670.8 290.0 659.5 283.5 650.1 274.8 633.5 270.3 620.9 267.0 607.5 265.3 593.7 265.4 580.2 267.3 567.6 271.1 556.4 276.6 547.2 280.0 543.5 287.6 537.7 291.8 535.8 300.7 533.5 305.4 533.1 314.9 533.7 324.5 535.7 333.9 538.8 342.9 542.6 355.7 548.8 401.6 574.4 430.0 588.5 431.5 590.2 431.7 592.0 425.2 603.2 424.7 606.0 425.7 607.6 427.5 607.9 430.2 607.2 436.4 603.0 441.0 597.3 441.8 594.9 441.3 593.4 439.4 593.1 436.3 594.2 429.2 599.1 426.5 602.0 424.8 604.8 424.4 606.8 425.4 608.2 427.3 608.4 430.1 607.6 436.7 603.2 441.6 597.0 442.4 594.4 441.9 593.0 440.0 592.6 436.6 593.7 428.7 599.2 425.9 602.2 424.1 605.2 423.8 607.3 424.9 608.7 426.9 609.0 429.9 608.1 436.9 603.3 440.0 600.1 442.2 596.7 443.0 594.0 442.4 592.5 440.4 592.1 436.7 593.4 432.6 595.8 428.3 599.3 425.3 602.4 423.6 605.3 423.2 607.8 424.3 609.3 426.7 609.5 430.0 608.5 437.1 603.7 440.3 600.1 442.7 596.6 443.7 593.6 443.1 591.9 440.8 591.6 436.9 592.9 432.5 595.6 427.9 599.2 424.8 602.6 422.8 605.9 422.5 608.5 423.7 610.0 426.4 610.2 429.9 609.1 433.6 606.9 437.5 603.7 441.0 600.0 443.5 596.1 444.4 592.9 443.6 591.3 442.1 590.9 440.0 591.3 434.0 594.2 427.6 599.1 423.0 604.3 421.6 608.5 422.1 610.0 423.3 610.8 427.7 610.5 433.2 607.7"/><path stroke="#eae51a" d="M409.9 699.0 382.7 691.4 376.0 690.7 353.9 689.9 346.2 688.8 337.1 686.6 329.4 683.9 321.0 679.8 311.9 673.9 305.6 668.8 296.2 659.1 290.1 651.1 281.7 636.9 277.1 626.0 272.1 608.1 270.5 595.8 270.4 583.6 271.9 572.1 275.2 561.8 277.3 557.3 282.8 549.6 289.5 544.0 297.1 540.4 305.3 538.7 314.0 538.7 322.8 540.0 331.5 542.5 339.9 545.6 355.7 553.1 424.4 592.2 428.3 594.8 430.0 596.7 430.5 598.5 430.1 602.0 430.6 602.9 432.3 602.7 434.6 601.2 436.2 599.2 436.2 597.9 434.4 598.2 432.0 599.9 430.4 601.9 430.6 603.1 432.4 602.9 434.7 601.2 436.4 599.1 436.3 597.8 434.5 598.1 431.9 599.9 430.3 601.9 430.4 603.3 432.3 603.0 434.8 601.3 436.6 599.0 436.5 597.6 434.6 597.9 431.8 599.8 430.0 602.1 430.3 603.5 432.2 603.2 434.8 601.4 436.8 598.9 436.7 597.5 434.7 597.8 431.7 599.8 429.8 602.2 430.0 603.7 432.1 603.4 434.9 601.5 436.9 598.9 436.9 597.3 434.3 597.8 430.8 600.5 429.4 603.1 429.8 603.9 430.9 603.9"/><path stroke="#fde725" d="M323.1 667.6 323.5 669.3 322.3 670.1 319.5 669.3 315.4 666.8 308.4 660.8 300.4 651.6 294.4 642.4 290.7 635.3 285.9 623.2 283.6 614.4 282.1 605.4 281.7 596.3 282.2 587.5 283.9 579.3 288.5 568.8 292.8 563.2 297.9 558.9 300.7 557.3 306.7 555.0 316.5 553.8 323.3 554.4 330.0 555.7 343.1 560.2 358.0 567.5 373.1 576.5 392.6 590.2 413.7 606.9 417.6 609.3 420.8 610.4 424.5 610.7 428.5 609.9 432.7 607.9 437.4 604.5 442.1 599.7 445.0 595.2 446.0 591.5 445.6 590.2 444.8 589.6 441.5 589.7 436.3 591.9 430.1 596.0 424.9 600.6 421.3 604.9 419.7 608.6 420.1 611.4 422.3 612.8 425.7 612.6 430.1 610.8 434.8 607.8 439.5 603.6 443.7 598.7 446.2 594.3 447.1 590.8 446.0 588.9 442.5 588.8 436.9 591.1 430.2 595.4 424.1 600.7 420.3 605.3 418.6 609.2 419.0 612.3 421.3 613.7 424.8 613.6 429.5 611.9 434.4 608.8 439.6 604.4 444.2 599.0 447.3 593.7 448.1 589.9 447.7 588.7 446.8 587.9 442.9 588.0 436.8 590.7 429.5 595.4 423.0 601.1 419.1 605.9 417.4 610.0 417.8 613.3 420.5 614.9 424.3 614.8 429.4 612.8 434.7 609.4 440.3 604.6 445.2 598.7 448.3 593.5 449.3 589.3 449.0 587.8 448.0 586.9 443.9 586.9 437.2 589.8 428.6 595.5 421.7 601.6 417.6 606.7 415.9 611.3 416.6 614.7 419.6 616.3 423.7 616.1 429.2 613.9 435.0 610.2 441.0 604.8 446.4 598.4 449.7 592.6 450.7 588.1 449.4 585.8 447.8 585.4 445.0 585.7 437.7 588.9 428.3 595.0 420.7 601.6 416.3 607.1 414.3 612.0 414.2 614.1 415.0 616.0 416.2 617.2 418.1 617.9 420.9 618.0 423.9 617.3 431.4 613.8 438.6 608.3 445.6 600.8 450.8 592.7 452.1 589.2 452.3 586.9 451.5 584.9 450.0 584.1 447.2 584.1 443.6 585.2"/></svg>

<!-- ============ EDITOR PANEL ============ -->
<div class="a panel" style="left:650px;top:97px;width:626px;height:623px"></div>
<div class="a toolshadow" style="left:650px;top:92px;width:626px;height:6px"></div>
<div class="a tab" style="left:650px;top:71px;width:142px;height:32px"></div>
<svg style="left:659.4px;top:77.6px" width="11" height="11.5"><path d="M0 0.8 Q0 0 0.8 0 H7.2 L10.6 3.4 V10.7 Q10.6 11.2 10 11.2 H0.8 Q0 11.2 0 10.4Z" fill="#5f8088"/><rect x="2" y="7.2" width="7" height="0.9" fill="#fff" opacity="0.8"/><rect x="2" y="5" width="4" height="0.9" fill="#fff" opacity="0.5"/><circle cx="8" cy="2.8" r="1" fill="#fff"/></svg>
<div class="a tt" style="left:676.6px;top:75px">lorenz.py</div>
<svg style="left:771.5px;top:78.5px" width="9" height="9"><path d="M0.5 0.5 L8.5 8.5 M8.5 0.5 L0.5 8.5" stroke="#555" stroke-width="1.2"/></svg>
<div class="a" style="left:650px;top:103px;width:626px;height:617px;overflow:hidden;border-top:1px solid #c4c4c4">
  <div class="a" style="left:0;top:0;width:37.5px;height:617px;background:#eeeeee;border-right:1px solid #dddddd"></div>
  <div class="a mono gut" style="left:0;top:-11.25px;width:26.5px"><div class="ln">5</div>
<div class="ln">6</div>
<div class="ln">7</div>
<div class="ln">8</div>
<div class="ln">9</div>
<div class="ln">10</div>
<div class="ln">11</div>
<div class="ln">12</div>
<div class="ln">13</div>
<div class="ln">14</div>
<div class="ln">15</div>
<div class="ln">16</div>
<div class="ln">17</div>
<div class="ln">18</div>
<div class="ln">19</div>
<div class="ln">20</div>
<div class="ln">21</div>
<div class="ln">22</div>
<div class="ln">23</div>
<div class="ln">24</div>
<div class="ln">25</div>
<div class="ln">26</div>
<div class="ln">27</div>
<div class="ln">28</div>
<div class="ln">29</div>
<div class="ln">30</div>
<div class="ln">31</div>
<div class="ln">32</div>
<div class="ln">33</div>
<div class="ln">34</div>
<div class="ln">35</div>
<div class="ln">36</div>
<div class="ln">37</div>
<div class="ln">38</div>
<div class="ln">39</div>
<div class="ln">40</div>
<div class="ln">41</div></div>
  <div class="a mono" style="left:43.25px;top:-11.25px"><div class="ln"> </div>
<div class="ln"><b class="k">def</b> <b class="d">solve_lorenz</b>(sigma<b class="e">=</b><b class="n">10.0</b>, beta<b class="e">=</b><b class="n">8.</b><b class="o">/</b><b class="n">3</b>, rho<b class="e">=</b><b class="n">28.0</b>):</div>
<div class="ln">    <b class="s">&quot;&quot;&quot;Plot a solution to the Lorenz differential equations.&quot;&quot;&quot;</b></div>
<div class="ln"> </div>
<div class="ln">    max_time <b class="e">=</b> <b class="n">4.0</b></div>
<div class="ln">    N <b class="e">=</b> <b class="n">30</b></div>
<div class="ln"> </div>
<div class="ln">    fig <b class="e">=</b> plt.<b class="p">figure</b>()</div>
<div class="ln">    ax <b class="e">=</b> fig.<b class="p">add_axes</b>([<b class="n">0</b>, <b class="n">0</b>, <b class="n">1</b>, <b class="n">1</b>], projection<b class="e">=</b><b class="s">&#x27;3d&#x27;</b>)</div>
<div class="ln">    ax.<b class="p">axis</b>(<b class="s">&#x27;off&#x27;</b>)</div>
<div class="ln"> </div>
<div class="ln">    <i class="c"># prepare the axes limits</i></div>
<div class="ln">    ax.<b class="p">set_xlim</b>((<b class="o">-</b><b class="n">25</b>, <b class="n">25</b>))</div>
<div class="ln">    ax.<b class="p">set_ylim</b>((<b class="o">-</b><b class="n">35</b>, <b class="n">35</b>))</div>
<div class="ln">    ax.<b class="p">set_zlim</b>((<b class="n">5</b>, <b class="n">55</b>))</div>
<div class="ln"> </div>
<div class="ln">    <b class="k">def</b> <b class="d">lorenz_deriv</b>(x_y_z, t0, sigma<b class="e">=</b>sigma, beta<b class="e">=</b>beta, rho<b class="e">=</b>rho):</div>
<div class="ln">        <b class="s">&quot;&quot;&quot;Compute the time-derivative of a Lorenz system.&quot;&quot;&quot;</b></div>
<div class="ln">        x, y, z <b class="e">=</b> x_y_z</div>
<div class="ln">        <b class="k">return</b> [sigma <b class="o">*</b> (y <b class="o">-</b> x), x <b class="o">*</b> (rho <b class="o">-</b> z) <b class="o">-</b> y, x <b class="o">*</b> y <b class="o">-</b> beta <b class="o">*</b> z]</div>
<div class="ln"> </div>
<div class="ln">    <i class="c"># Choose random starting points, uniformly distributed from -15 to 15</i></div>
<div class="ln">    np.<b class="p">random</b>.<b class="p">seed</b>(<b class="n">1</b>)</div>
<div class="ln">    x0 <b class="e">=</b> <b class="o">-</b><b class="n">15</b> <b class="o">+</b> <b class="n">30</b> <b class="o">*</b> np.<b class="p">random</b>.<b class="p">random</b>((N, <b class="n">3</b>))</div>
<div class="ln"> </div>
<div class="ln">    <i class="c"># Solve for the trajectories</i></div>
<div class="ln">    t <b class="e">=</b> np.<b class="p">linspace</b>(<b class="n">0</b>, max_time, <b class="bi">int</b>(<b class="n">250</b><b class="o">*</b>max_time))</div>
<div class="ln">    x_t <b class="e">=</b> np.<b class="p">asarray</b>([integrate.<b class="p">odeint</b>(lorenz_deriv, x0i, t)</div>
<div class="ln">                      <b class="k">for</b> x0i <b class="k">in</b> x0])</div>
<div class="ln"> </div>
<div class="ln">    <i class="c"># choose a different color for each trajectory</i></div>
<div class="ln">    colors <b class="e">=</b> plt.<b class="p">cm</b>.<b class="p">viridis</b>(np.<b class="p">linspace</b>(<b class="n">0</b>, <b class="n">1</b>, N))</div>
<div class="ln"> </div>
<div class="ln">    <b class="k">for</b> i <b class="k">in</b> <b class="bi">range</b>(N):</div>
<div class="ln">        x, y, z <b class="e">=</b> x_t[i,:,:].<b class="p">T</b></div>
<div class="ln">        lines <b class="e">=</b> ax.<b class="p">plot</b>(x, y, z, <b class="s">&#x27;-&#x27;</b>, c<b class="e">=</b>colors[i])</div>
<div class="ln">        plt.<b class="p">setp</b>(lines, linewidth<b class="e">=</b><b class="n">2</b>)</div></div>
</div>

<!-- ============ DROPDOWN ============ -->
<div id="dd" class="a"></div>
<div class="a" style="left:1007.4px;top:47.5px;font-size:11.5px;color:#9c9c9c;letter-spacing:0.12px;line-height:14px;white-space:nowrap">Select workspace</div>
<svg style="left:1008px;top:73px" width="15" height="15"><path d="M12.5 2.3 L1.7 11 M12.5 12.7 L1.7 4" stroke="#1479c9" stroke-width="3.2"/><path d="M11 0.3 L14.8 2.1 V12.9 L11 14.7Z" fill="#1f9cf0"/></svg>
<div class="a" style="left:1031.8px;top:73px;font-size:13px;color:#222;line-height:16px;white-space:nowrap">VS Code</div>
<div class="a" style="left:996px;top:94px;width:150.5px;height:28px;background:#e9ecf0"></div>
<svg style="left:1008px;top:100.6px" width="14" height="14"><path d="M1.3 5.2 Q7 -2.6 12.7 5.2 Q7 1.6 1.3 5.2Z" fill="#f0883a"/><path d="M1.3 8.8 Q7 16.6 12.7 8.8 Q7 12.4 1.3 8.8Z" fill="#f0883a"/><rect x="1" y="6.1" width="12" height="1.8" rx="0.4" fill="#9a9a9a" opacity="0.8"/></svg>
<div class="a" style="left:1031.8px;top:101px;font-size:13px;color:#222;letter-spacing:0.4px;line-height:16px;white-space:nowrap">Jupyter Lab</div>

</body></html>
